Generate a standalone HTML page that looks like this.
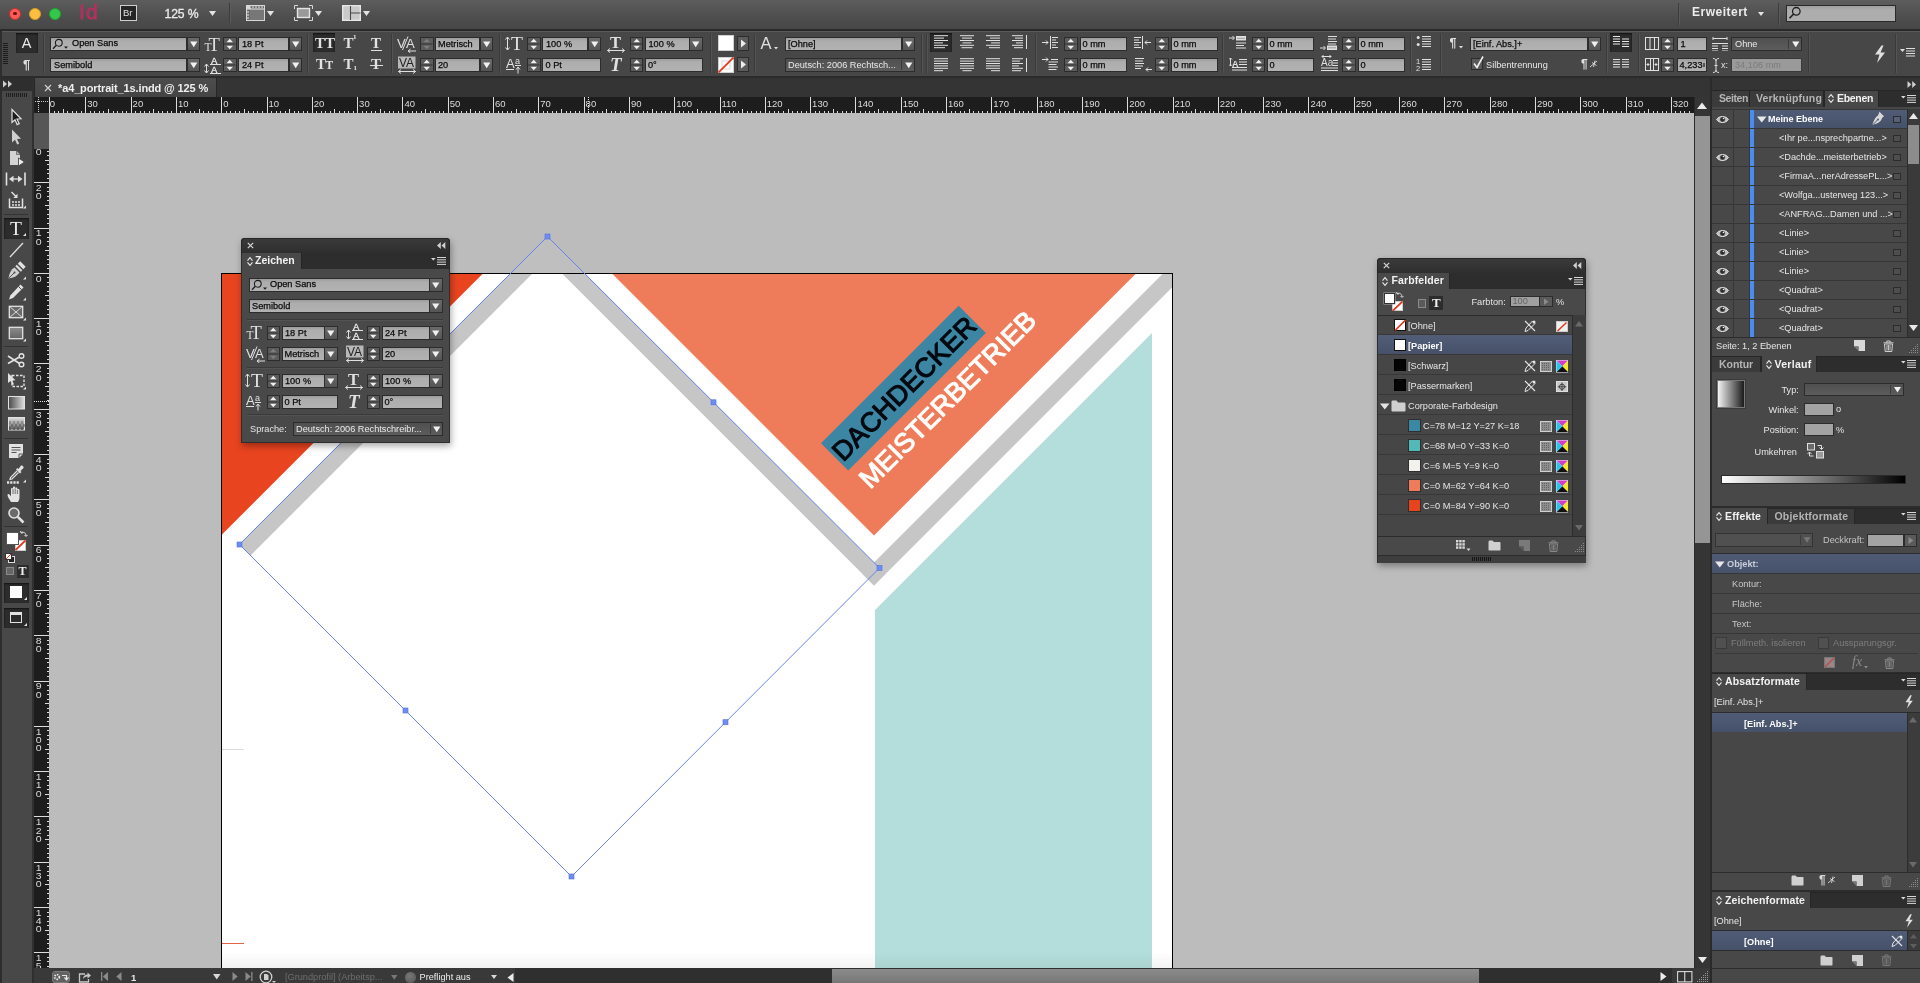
<!DOCTYPE html>
<html><head><meta charset="utf-8"><title>InDesign</title><style>
html,body{margin:0;padding:0;background:#484848;}
body{width:1920px;height:983px;position:relative;overflow:hidden;font-family:"Liberation Sans",sans-serif;will-change:transform;}
div,span.t,svg.i{position:absolute;box-sizing:border-box;}
span.t{white-space:nowrap;}
.f{background:linear-gradient(#9c9c9c 0,#adadad 3px,#b2b2b2 100%);border:1px solid #2c2c2c;}
.fd{background:linear-gradient(#505050,#5c5c5c);border:1px solid #2c2c2c;}
.dd{background:linear-gradient(#6a6a6a,#555);border:1px solid #2c2c2c;}
.st{background:#5c5c5c;border:1px solid #2c2c2c;}
.sel{background:#2c2c2c;box-shadow:inset 0 1px 2px #111;}
</style></head><body>
<div style="left:49px;top:113px;width:1646px;height:855px;background:#bcbcbc;"></div>
<svg class="i" style="left:49px;top:113px;" width="1646" height="855" viewBox="49 113 1646 855"><rect x="221" y="273" width="952" height="700" fill="#000"/><rect x="222" y="274" width="950" height="700" fill="#fff"/><clipPath id="pg"><rect x="222" y="274" width="950" height="700"/></clipPath><g clip-path="url(#pg)"><polygon points="222,274 482.5,274 222,534.5" fill="#e8441f"/><polygon points="612.5,274 1135.5,274 874,535.5" fill="#ee7b5a"/><polygon points="1152,333 1152,980 875,980 875,610" fill="#b3dedb"/><polygon points="547.5,236 558.75,247.25 250.5,555.5 239.25,544.25" fill="#c6c6c6"/><polygon points="547.5,236 885.5,574 874,585.5 536,247.5" fill="#c6c6c6"/><polygon points="862.5,574 1180,256.5 1180,279.5 874,585.5" fill="#c6c6c6"/><rect x="222" y="749" width="22" height="1" fill="#dcdcdc"/><rect x="222" y="943" width="22" height="1" fill="#e0634a"/><defs><linearGradient id="pgb" x1="0" x2="0" y1="0" y2="1"><stop offset="0" stop-color="#000" stop-opacity="0"/><stop offset="1" stop-color="#000" stop-opacity="0.05"/></linearGradient></defs><rect x="222" y="952" width="950" height="16" fill="url(#pgb)"/></g><polygon points="547.5,236 584.5,273 510.5,273" fill="#bfbfbf"/><g transform="translate(821,443.3) rotate(-45)"><rect x="0" y="0" width="194.6" height="38.5" fill="#3c86a3"/><text x="2" y="29.3" font-family="Liberation Sans, sans-serif" font-size="27" fill="#04090f" stroke="#04090f" stroke-width="1.1" stroke-linejoin="round" textLength="191" lengthAdjust="spacingAndGlyphs">DACHDECKER</text><text x="2" y="67.8" font-family="Liberation Sans, sans-serif" font-size="27" fill="#fffdfa" stroke="#fffdfa" stroke-width="1.1" stroke-linejoin="round" textLength="237" lengthAdjust="spacingAndGlyphs">MEISTERBETRIEB</text></g><polygon points="547.5,236.5 879.5,568 571.5,876.5 239.5,544.5" fill="none" stroke="#6684ea" stroke-width="1"/><rect x="545.0" y="234.0" width="5" height="5" fill="#6f8df0" stroke="#4f6fe0" stroke-width="0.6"/><rect x="877.0" y="565.5" width="5" height="5" fill="#6f8df0" stroke="#4f6fe0" stroke-width="0.6"/><rect x="569.0" y="874.0" width="5" height="5" fill="#6f8df0" stroke="#4f6fe0" stroke-width="0.6"/><rect x="237.0" y="542.0" width="5" height="5" fill="#6f8df0" stroke="#4f6fe0" stroke-width="0.6"/><rect x="711.0" y="399.8" width="5" height="5" fill="#6f8df0" stroke="#4f6fe0" stroke-width="0.6"/><rect x="723.0" y="719.7" width="5" height="5" fill="#6f8df0" stroke="#4f6fe0" stroke-width="0.6"/><rect x="403.0" y="708.0" width="5" height="5" fill="#6f8df0" stroke="#4f6fe0" stroke-width="0.6"/></svg>
<div style="left:49px;top:97px;width:1645px;height:16px;background:#1d1d1d;"></div>
<svg class="i" style="left:49px;top:97px;" width="1645" height="16" viewBox="49 97 1645 16"><path d="M49.6 111v2M54.1 111v2M58.6 111v2M63.1 109v4M67.7 111v2M72.2 111v2M76.7 111v2M81.3 111v2M85.8 97v16M90.3 111v2M94.9 111v2M99.4 111v2M103.9 111v2M108.4 109v4M113.0 111v2M117.5 111v2M122.0 111v2M126.6 111v2M131.1 97v16M135.6 111v2M140.2 111v2M144.7 111v2M149.2 111v2M153.8 109v4M158.3 111v2M162.8 111v2M167.3 111v2M171.9 111v2M176.4 97v16M180.9 111v2M185.5 111v2M190.0 111v2M194.5 111v2M199.0 109v4M203.6 111v2M208.1 111v2M212.6 111v2M217.2 111v2M221.7 97v16M226.2 111v2M230.8 111v2M235.3 111v2M239.8 111v2M244.3 109v4M248.9 111v2M253.4 111v2M257.9 111v2M262.5 111v2M267.0 97v16M271.5 111v2M276.1 111v2M280.6 111v2M285.1 111v2M289.6 109v4M294.2 111v2M298.7 111v2M303.2 111v2M307.8 111v2M312.3 97v16M316.8 111v2M321.4 111v2M325.9 111v2M330.4 111v2M334.9 109v4M339.5 111v2M344.0 111v2M348.5 111v2M353.1 111v2M357.6 97v16M362.1 111v2M366.7 111v2M371.2 111v2M375.7 111v2M380.2 109v4M384.8 111v2M389.3 111v2M393.8 111v2M398.4 111v2M402.9 97v16M407.4 111v2M412.0 111v2M416.5 111v2M421.0 111v2M425.6 109v4M430.1 111v2M434.6 111v2M439.1 111v2M443.7 111v2M448.2 97v16M452.7 111v2M457.3 111v2M461.8 111v2M466.3 111v2M470.9 109v4M475.4 111v2M479.9 111v2M484.4 111v2M489.0 111v2M493.5 97v16M498.0 111v2M502.6 111v2M507.1 111v2M511.6 111v2M516.1 109v4M520.7 111v2M525.2 111v2M529.7 111v2M534.3 111v2M538.8 97v16M543.3 111v2M547.9 111v2M552.4 111v2M556.9 111v2M561.5 109v4M566.0 111v2M570.5 111v2M575.0 111v2M579.6 111v2M584.1 97v16M588.6 111v2M593.2 111v2M597.7 111v2M602.2 111v2M606.8 109v4M611.3 111v2M615.8 111v2M620.3 111v2M624.9 111v2M629.4 97v16M633.9 111v2M638.5 111v2M643.0 111v2M647.5 111v2M652.0 109v4M656.6 111v2M661.1 111v2M665.6 111v2M670.2 111v2M674.7 97v16M679.2 111v2M683.8 111v2M688.3 111v2M692.8 111v2M697.4 109v4M701.9 111v2M706.4 111v2M710.9 111v2M715.5 111v2M720.0 97v16M724.5 111v2M729.1 111v2M733.6 111v2M738.1 111v2M742.7 109v4M747.2 111v2M751.7 111v2M756.2 111v2M760.8 111v2M765.3 97v16M769.8 111v2M774.4 111v2M778.9 111v2M783.4 111v2M788.0 109v4M792.5 111v2M797.0 111v2M801.5 111v2M806.1 111v2M810.6 97v16M815.1 111v2M819.7 111v2M824.2 111v2M828.7 111v2M833.2 109v4M837.8 111v2M842.3 111v2M846.8 111v2M851.4 111v2M855.9 97v16M860.4 111v2M865.0 111v2M869.5 111v2M874.0 111v2M878.5 109v4M883.1 111v2M887.6 111v2M892.1 111v2M896.7 111v2M901.2 97v16M905.7 111v2M910.3 111v2M914.8 111v2M919.3 111v2M923.9 109v4M928.4 111v2M932.9 111v2M937.4 111v2M942.0 111v2M946.5 97v16M951.0 111v2M955.6 111v2M960.1 111v2M964.6 111v2M969.2 109v4M973.7 111v2M978.2 111v2M982.7 111v2M987.3 111v2M991.8 97v16M996.3 111v2M1000.9 111v2M1005.4 111v2M1009.9 111v2M1014.5 109v4M1019.0 111v2M1023.5 111v2M1028.0 111v2M1032.6 111v2M1037.1 97v16M1041.6 111v2M1046.2 111v2M1050.7 111v2M1055.2 111v2M1059.8 109v4M1064.3 111v2M1068.8 111v2M1073.3 111v2M1077.9 111v2M1082.4 97v16M1086.9 111v2M1091.5 111v2M1096.0 111v2M1100.5 111v2M1105.0 109v4M1109.6 111v2M1114.1 111v2M1118.6 111v2M1123.2 111v2M1127.7 97v16M1132.2 111v2M1136.8 111v2M1141.3 111v2M1145.8 111v2M1150.4 109v4M1154.9 111v2M1159.4 111v2M1163.9 111v2M1168.5 111v2M1173.0 97v16M1177.5 111v2M1182.1 111v2M1186.6 111v2M1191.1 111v2M1195.7 109v4M1200.2 111v2M1204.7 111v2M1209.2 111v2M1213.8 111v2M1218.3 97v16M1222.8 111v2M1227.4 111v2M1231.9 111v2M1236.4 111v2M1241.0 109v4M1245.5 111v2M1250.0 111v2M1254.5 111v2M1259.1 111v2M1263.6 97v16M1268.1 111v2M1272.7 111v2M1277.2 111v2M1281.7 111v2M1286.2 109v4M1290.8 111v2M1295.3 111v2M1299.8 111v2M1304.4 111v2M1308.9 97v16M1313.4 111v2M1318.0 111v2M1322.5 111v2M1327.0 111v2M1331.6 109v4M1336.1 111v2M1340.6 111v2M1345.1 111v2M1349.7 111v2M1354.2 97v16M1358.7 111v2M1363.3 111v2M1367.8 111v2M1372.3 111v2M1376.9 109v4M1381.4 111v2M1385.9 111v2M1390.4 111v2M1395.0 111v2M1399.5 97v16M1404.0 111v2M1408.6 111v2M1413.1 111v2M1417.6 111v2M1422.2 109v4M1426.7 111v2M1431.2 111v2M1435.7 111v2M1440.3 111v2M1444.8 97v16M1449.3 111v2M1453.9 111v2M1458.4 111v2M1462.9 111v2M1467.5 109v4M1472.0 111v2M1476.5 111v2M1481.0 111v2M1485.6 111v2M1490.1 97v16M1494.6 111v2M1499.2 111v2M1503.7 111v2M1508.2 111v2M1512.8 109v4M1517.3 111v2M1521.8 111v2M1526.3 111v2M1530.9 111v2M1535.4 97v16M1539.9 111v2M1544.5 111v2M1549.0 111v2M1553.5 111v2M1558.1 109v4M1562.6 111v2M1567.1 111v2M1571.6 111v2M1576.2 111v2M1580.7 97v16M1585.2 111v2M1589.8 111v2M1594.3 111v2M1598.8 111v2M1603.4 109v4M1607.9 111v2M1612.4 111v2M1616.9 111v2M1621.5 111v2M1626.0 97v16M1630.5 111v2M1635.1 111v2M1639.6 111v2M1644.1 111v2M1648.7 109v4M1653.2 111v2M1657.7 111v2M1662.2 111v2M1666.8 111v2M1671.3 97v16M1675.8 111v2M1680.4 111v2M1684.9 111v2M1689.4 111v2M1694.0 109v4" stroke="#dcdcdc" stroke-width="1" fill="none" shape-rendering="crispEdges"/></svg>
<div style="left:49px;top:97px;width:1645px;height:16px;overflow:hidden;"><span class="t" style="left:-4.6px;top:0.5px;font-size:9.5px;line-height:12px;color:#dcdcdc;">40</span><span class="t" style="left:38.3px;top:0.5px;font-size:9.5px;line-height:12px;color:#dcdcdc;">30</span><span class="t" style="left:83.6px;top:0.5px;font-size:9.5px;line-height:12px;color:#dcdcdc;">20</span><span class="t" style="left:128.9px;top:0.5px;font-size:9.5px;line-height:12px;color:#dcdcdc;">10</span><span class="t" style="left:174.2px;top:0.5px;font-size:9.5px;line-height:12px;color:#dcdcdc;">0</span><span class="t" style="left:219.5px;top:0.5px;font-size:9.5px;line-height:12px;color:#dcdcdc;">10</span><span class="t" style="left:264.8px;top:0.5px;font-size:9.5px;line-height:12px;color:#dcdcdc;">20</span><span class="t" style="left:310.1px;top:0.5px;font-size:9.5px;line-height:12px;color:#dcdcdc;">30</span><span class="t" style="left:355.4px;top:0.5px;font-size:9.5px;line-height:12px;color:#dcdcdc;">40</span><span class="t" style="left:400.7px;top:0.5px;font-size:9.5px;line-height:12px;color:#dcdcdc;">50</span><span class="t" style="left:446.0px;top:0.5px;font-size:9.5px;line-height:12px;color:#dcdcdc;">60</span><span class="t" style="left:491.3px;top:0.5px;font-size:9.5px;line-height:12px;color:#dcdcdc;">70</span><span class="t" style="left:536.6px;top:0.5px;font-size:9.5px;line-height:12px;color:#dcdcdc;">80</span><span class="t" style="left:581.9px;top:0.5px;font-size:9.5px;line-height:12px;color:#dcdcdc;">90</span><span class="t" style="left:627.2px;top:0.5px;font-size:9.5px;line-height:12px;color:#dcdcdc;">100</span><span class="t" style="left:672.5px;top:0.5px;font-size:9.5px;line-height:12px;color:#dcdcdc;">110</span><span class="t" style="left:717.8px;top:0.5px;font-size:9.5px;line-height:12px;color:#dcdcdc;">120</span><span class="t" style="left:763.1px;top:0.5px;font-size:9.5px;line-height:12px;color:#dcdcdc;">130</span><span class="t" style="left:808.4px;top:0.5px;font-size:9.5px;line-height:12px;color:#dcdcdc;">140</span><span class="t" style="left:853.7px;top:0.5px;font-size:9.5px;line-height:12px;color:#dcdcdc;">150</span><span class="t" style="left:899.0px;top:0.5px;font-size:9.5px;line-height:12px;color:#dcdcdc;">160</span><span class="t" style="left:944.3px;top:0.5px;font-size:9.5px;line-height:12px;color:#dcdcdc;">170</span><span class="t" style="left:989.6px;top:0.5px;font-size:9.5px;line-height:12px;color:#dcdcdc;">180</span><span class="t" style="left:1034.9px;top:0.5px;font-size:9.5px;line-height:12px;color:#dcdcdc;">190</span><span class="t" style="left:1080.2px;top:0.5px;font-size:9.5px;line-height:12px;color:#dcdcdc;">200</span><span class="t" style="left:1125.5px;top:0.5px;font-size:9.5px;line-height:12px;color:#dcdcdc;">210</span><span class="t" style="left:1170.8px;top:0.5px;font-size:9.5px;line-height:12px;color:#dcdcdc;">220</span><span class="t" style="left:1216.1px;top:0.5px;font-size:9.5px;line-height:12px;color:#dcdcdc;">230</span><span class="t" style="left:1261.4px;top:0.5px;font-size:9.5px;line-height:12px;color:#dcdcdc;">240</span><span class="t" style="left:1306.7px;top:0.5px;font-size:9.5px;line-height:12px;color:#dcdcdc;">250</span><span class="t" style="left:1352.0px;top:0.5px;font-size:9.5px;line-height:12px;color:#dcdcdc;">260</span><span class="t" style="left:1397.3px;top:0.5px;font-size:9.5px;line-height:12px;color:#dcdcdc;">270</span><span class="t" style="left:1442.6px;top:0.5px;font-size:9.5px;line-height:12px;color:#dcdcdc;">280</span><span class="t" style="left:1487.9px;top:0.5px;font-size:9.5px;line-height:12px;color:#dcdcdc;">290</span><span class="t" style="left:1533.2px;top:0.5px;font-size:9.5px;line-height:12px;color:#dcdcdc;">300</span><span class="t" style="left:1578.5px;top:0.5px;font-size:9.5px;line-height:12px;color:#dcdcdc;">310</span><span class="t" style="left:1623.8px;top:0.5px;font-size:9.5px;line-height:12px;color:#dcdcdc;">320</span></div>
<svg class="i" style="left:586.5px;top:97px;" width="2" height="16" viewBox="0 0 2 16"><path d="M1 0v16" stroke="#e8e8e8" stroke-width="1" stroke-dasharray="1 1" shape-rendering="crispEdges"/></svg>
<div style="left:49px;top:97px;width:1px;height:16px;background:#dcdcdc;"></div>
<div style="left:34px;top:97px;width:15px;height:16px;background:#1d1d1d;"></div>
<svg class="i" style="left:34px;top:97px;" width="15" height="16" viewBox="0 0 15 16"><path d="M1 4.5h13M4.5 0v16" stroke="#cfcfcf" stroke-width="1" stroke-dasharray="1 1" fill="none" shape-rendering="crispEdges"/></svg>
<div style="left:34px;top:113px;width:15px;height:855px;background:#1d1d1d;"></div>
<svg class="i" style="left:34px;top:113px;" width="15" height="855" viewBox="34 113 15 855"><path d="M47 151.0h2M47 155.5h2M45 160.1h4M47 164.6h2M47 169.1h2M47 173.6h2M47 178.2h2M34 182.7h15M47 187.2h2M47 191.8h2M47 196.3h2M47 200.8h2M45 205.4h4M47 209.9h2M47 214.4h2M47 218.9h2M47 223.5h2M34 228.0h15M47 232.5h2M47 237.1h2M47 241.6h2M47 246.1h2M45 250.7h4M47 255.2h2M47 259.7h2M47 264.2h2M47 268.8h2M34 273.3h15M47 277.8h2M47 282.4h2M47 286.9h2M47 291.4h2M45 295.9h4M47 300.5h2M47 305.0h2M47 309.5h2M47 314.1h2M34 318.6h15M47 323.1h2M47 327.7h2M47 332.2h2M47 336.7h2M45 341.2h4M47 345.8h2M47 350.3h2M47 354.8h2M47 359.4h2M34 363.9h15M47 368.4h2M47 373.0h2M47 377.5h2M47 382.0h2M45 386.6h4M47 391.1h2M47 395.6h2M47 400.1h2M47 404.7h2M34 409.2h15M47 413.7h2M47 418.3h2M47 422.8h2M47 427.3h2M45 431.9h4M47 436.4h2M47 440.9h2M47 445.4h2M47 450.0h2M34 454.5h15M47 459.0h2M47 463.6h2M47 468.1h2M47 472.6h2M45 477.2h4M47 481.7h2M47 486.2h2M47 490.7h2M47 495.3h2M34 499.8h15M47 504.3h2M47 508.9h2M47 513.4h2M47 517.9h2M45 522.5h4M47 527.0h2M47 531.5h2M47 536.0h2M47 540.6h2M34 545.1h15M47 549.6h2M47 554.2h2M47 558.7h2M47 563.2h2M45 567.8h4M47 572.3h2M47 576.8h2M47 581.3h2M47 585.9h2M34 590.4h15M47 594.9h2M47 599.5h2M47 604.0h2M47 608.5h2M45 613.0h4M47 617.6h2M47 622.1h2M47 626.6h2M47 631.2h2M34 635.7h15M47 640.2h2M47 644.8h2M47 649.3h2M47 653.8h2M45 658.4h4M47 662.9h2M47 667.4h2M47 671.9h2M47 676.5h2M34 681.0h15M47 685.5h2M47 690.1h2M47 694.6h2M47 699.1h2M45 703.7h4M47 708.2h2M47 712.7h2M47 717.2h2M47 721.8h2M34 726.3h15M47 730.8h2M47 735.4h2M47 739.9h2M47 744.4h2M45 749.0h4M47 753.5h2M47 758.0h2M47 762.5h2M47 767.1h2M34 771.6h15M47 776.1h2M47 780.7h2M47 785.2h2M47 789.7h2M45 794.2h4M47 798.8h2M47 803.3h2M47 807.8h2M47 812.4h2M34 816.9h15M47 821.4h2M47 826.0h2M47 830.5h2M47 835.0h2M45 839.5h4M47 844.1h2M47 848.6h2M47 853.1h2M47 857.7h2M34 862.2h15M47 866.7h2M47 871.3h2M47 875.8h2M47 880.3h2M45 884.9h4M47 889.4h2M47 893.9h2M47 898.4h2M47 903.0h2M34 907.5h15M47 912.0h2M47 916.6h2M47 921.1h2M47 925.6h2M45 930.2h4M47 934.7h2M47 939.2h2M47 943.7h2M47 948.3h2M34 952.8h15M47 957.3h2M47 961.9h2M47 966.4h2" stroke="#dcdcdc" stroke-width="1" fill="none" shape-rendering="crispEdges"/></svg>
<div style="left:34px;top:113px;width:15px;height:855px;overflow:hidden;"><span class="t" style="left:1.7px;top:26.9px;font-size:10.5px;line-height:9px;color:#dcdcdc;transform:scaleY(0.8);">3</span><span class="t" style="left:1.7px;top:35.2px;font-size:10.5px;line-height:9px;color:#dcdcdc;transform:scaleY(0.8);">0</span><span class="t" style="left:1.7px;top:71.0px;font-size:10.5px;line-height:9px;color:#dcdcdc;transform:scaleY(0.8);">2</span><span class="t" style="left:1.7px;top:79.3px;font-size:10.5px;line-height:9px;color:#dcdcdc;transform:scaleY(0.8);">0</span><span class="t" style="left:1.7px;top:116.3px;font-size:10.5px;line-height:9px;color:#dcdcdc;transform:scaleY(0.8);">1</span><span class="t" style="left:1.7px;top:124.6px;font-size:10.5px;line-height:9px;color:#dcdcdc;transform:scaleY(0.8);">0</span><span class="t" style="left:1.7px;top:161.6px;font-size:10.5px;line-height:9px;color:#dcdcdc;transform:scaleY(0.8);">0</span><span class="t" style="left:1.7px;top:206.9px;font-size:10.5px;line-height:9px;color:#dcdcdc;transform:scaleY(0.8);">1</span><span class="t" style="left:1.7px;top:215.2px;font-size:10.5px;line-height:9px;color:#dcdcdc;transform:scaleY(0.8);">0</span><span class="t" style="left:1.7px;top:252.2px;font-size:10.5px;line-height:9px;color:#dcdcdc;transform:scaleY(0.8);">2</span><span class="t" style="left:1.7px;top:260.5px;font-size:10.5px;line-height:9px;color:#dcdcdc;transform:scaleY(0.8);">0</span><span class="t" style="left:1.7px;top:297.5px;font-size:10.5px;line-height:9px;color:#dcdcdc;transform:scaleY(0.8);">3</span><span class="t" style="left:1.7px;top:305.8px;font-size:10.5px;line-height:9px;color:#dcdcdc;transform:scaleY(0.8);">0</span><span class="t" style="left:1.7px;top:342.8px;font-size:10.5px;line-height:9px;color:#dcdcdc;transform:scaleY(0.8);">4</span><span class="t" style="left:1.7px;top:351.1px;font-size:10.5px;line-height:9px;color:#dcdcdc;transform:scaleY(0.8);">0</span><span class="t" style="left:1.7px;top:388.1px;font-size:10.5px;line-height:9px;color:#dcdcdc;transform:scaleY(0.8);">5</span><span class="t" style="left:1.7px;top:396.4px;font-size:10.5px;line-height:9px;color:#dcdcdc;transform:scaleY(0.8);">0</span><span class="t" style="left:1.7px;top:433.4px;font-size:10.5px;line-height:9px;color:#dcdcdc;transform:scaleY(0.8);">6</span><span class="t" style="left:1.7px;top:441.7px;font-size:10.5px;line-height:9px;color:#dcdcdc;transform:scaleY(0.8);">0</span><span class="t" style="left:1.7px;top:478.7px;font-size:10.5px;line-height:9px;color:#dcdcdc;transform:scaleY(0.8);">7</span><span class="t" style="left:1.7px;top:487.0px;font-size:10.5px;line-height:9px;color:#dcdcdc;transform:scaleY(0.8);">0</span><span class="t" style="left:1.7px;top:524.0px;font-size:10.5px;line-height:9px;color:#dcdcdc;transform:scaleY(0.8);">8</span><span class="t" style="left:1.7px;top:532.3px;font-size:10.5px;line-height:9px;color:#dcdcdc;transform:scaleY(0.8);">0</span><span class="t" style="left:1.7px;top:569.3px;font-size:10.5px;line-height:9px;color:#dcdcdc;transform:scaleY(0.8);">9</span><span class="t" style="left:1.7px;top:577.6px;font-size:10.5px;line-height:9px;color:#dcdcdc;transform:scaleY(0.8);">0</span><span class="t" style="left:1.7px;top:614.6px;font-size:10.5px;line-height:9px;color:#dcdcdc;transform:scaleY(0.8);">1</span><span class="t" style="left:1.7px;top:622.9px;font-size:10.5px;line-height:9px;color:#dcdcdc;transform:scaleY(0.8);">0</span><span class="t" style="left:1.7px;top:631.2px;font-size:10.5px;line-height:9px;color:#dcdcdc;transform:scaleY(0.8);">0</span><span class="t" style="left:1.7px;top:659.9px;font-size:10.5px;line-height:9px;color:#dcdcdc;transform:scaleY(0.8);">1</span><span class="t" style="left:1.7px;top:668.2px;font-size:10.5px;line-height:9px;color:#dcdcdc;transform:scaleY(0.8);">1</span><span class="t" style="left:1.7px;top:676.5px;font-size:10.5px;line-height:9px;color:#dcdcdc;transform:scaleY(0.8);">0</span><span class="t" style="left:1.7px;top:705.2px;font-size:10.5px;line-height:9px;color:#dcdcdc;transform:scaleY(0.8);">1</span><span class="t" style="left:1.7px;top:713.5px;font-size:10.5px;line-height:9px;color:#dcdcdc;transform:scaleY(0.8);">2</span><span class="t" style="left:1.7px;top:721.8px;font-size:10.5px;line-height:9px;color:#dcdcdc;transform:scaleY(0.8);">0</span><span class="t" style="left:1.7px;top:750.5px;font-size:10.5px;line-height:9px;color:#dcdcdc;transform:scaleY(0.8);">1</span><span class="t" style="left:1.7px;top:758.8px;font-size:10.5px;line-height:9px;color:#dcdcdc;transform:scaleY(0.8);">3</span><span class="t" style="left:1.7px;top:767.1px;font-size:10.5px;line-height:9px;color:#dcdcdc;transform:scaleY(0.8);">0</span><span class="t" style="left:1.7px;top:795.8px;font-size:10.5px;line-height:9px;color:#dcdcdc;transform:scaleY(0.8);">1</span><span class="t" style="left:1.7px;top:804.1px;font-size:10.5px;line-height:9px;color:#dcdcdc;transform:scaleY(0.8);">4</span><span class="t" style="left:1.7px;top:812.4px;font-size:10.5px;line-height:9px;color:#dcdcdc;transform:scaleY(0.8);">0</span><span class="t" style="left:1.7px;top:841.1px;font-size:10.5px;line-height:9px;color:#dcdcdc;transform:scaleY(0.8);">1</span><span class="t" style="left:1.7px;top:849.4px;font-size:10.5px;line-height:9px;color:#dcdcdc;transform:scaleY(0.8);">5</span><span class="t" style="left:1.7px;top:857.7px;font-size:10.5px;line-height:9px;color:#dcdcdc;transform:scaleY(0.8);">0</span></div>
<svg class="i" style="left:34px;top:400px;" width="15" height="2" viewBox="0 0 15 2"><path d="M0 1h15" stroke="#e8e8e8" stroke-width="1" stroke-dasharray="1 1" shape-rendering="crispEdges"/></svg>
<div style="left:34px;top:113px;width:15px;height:36px;background:#565656;"></div>
<div style="left:0px;top:0px;width:1920px;height:30px;background:linear-gradient(#5d5d5d,#4d4d4d 60%,#464646);"></div>
<div style="left:0px;top:29px;width:1920px;height:2px;background:#2a2a2a;"></div>
<div style="left:9px;top:7.5px;width:12px;height:12px;border-radius:50%;background:#fc5b57;border:0.5px solid #c9302c;"></div>
<div style="left:29px;top:7.5px;width:12px;height:12px;border-radius:50%;background:#fdbd3f;border:0.5px solid #d89e23;"></div>
<div style="left:49px;top:7.5px;width:12px;height:12px;border-radius:50%;background:#34c84a;border:0.5px solid #1ea532;"></div>
<div style="left:13.2px;top:11.7px;width:3.6px;height:3.6px;border-radius:50%;background:#7a0d0b;"></div>
<span class="t" style="left:79px;top:1.0px;font-size:21px;line-height:22px;color:#b3315f;font-weight:normal;letter-spacing:1.2px;-webkit-text-stroke:0.8px #b3315f;">Id</span>
<div style="left:120px;top:5px;width:16.5px;height:15.5px;background:#262626;border:1px solid #d0d0d0;"></div>
<span class="t" style="left:123px;top:7.0px;font-size:9.5px;line-height:12px;color:#e0e0e0;font-weight:normal;">Br</span>
<span class="t" style="left:164.5px;top:5.5px;font-size:12.2px;line-height:16px;color:#ececec;font-weight:normal;letter-spacing:-0.1px;-webkit-text-stroke:0.3px #ececec;">125 %</span>
<svg class="i" style="left:209px;top:11px;" width="7" height="5" viewBox="0 0 7 5"><polygon points="0,0 7,0 3.5,5" fill="#e4e4e4"/></svg>
<div style="left:229px;top:3px;width:1px;height:20px;background:#3d3d3d;"></div>
<div style="left:230px;top:3px;width:1px;height:20px;background:#5c5c5c;"></div>
<svg class="i" style="left:246px;top:5px;" width="19" height="16" viewBox="0 0 19 16"><rect x="0.5" y="0.5" width="18" height="15" fill="#6a6a6a" stroke="#d8d8d8"/><rect x="4" y="4" width="14" height="11" fill="#777"/><path d="M4 0v4M0 4h18M7 1v2M10 1v2M13 1v2M16 1v2M1 7h2M1 10h2M1 13h2" stroke="#e8e8e8" stroke-width="1" fill="none"/><rect x="0" y="0" width="4" height="4" fill="#d8d8d8"/></svg>
<svg class="i" style="left:267px;top:11px;" width="7" height="5" viewBox="0 0 7 5"><polygon points="0,0 7,0 3.5,5" fill="#e4e4e4"/></svg>
<svg class="i" style="left:294px;top:5px;" width="19" height="16" viewBox="0 0 19 16"><rect x="3.5" y="3.5" width="12" height="9" fill="#9a9a9a" stroke="#e4e4e4" stroke-width="1.4"/><path d="M0.5 4V0.5H4M15 0.5h3.5V4M18.5 12v3.5H15M4 15.5H0.5V12" stroke="#d8d8d8" stroke-width="1" fill="none"/></svg>
<svg class="i" style="left:314.5px;top:11px;" width="7" height="5" viewBox="0 0 7 5"><polygon points="0,0 7,0 3.5,5" fill="#e4e4e4"/></svg>
<svg class="i" style="left:342px;top:5px;" width="19" height="16" viewBox="0 0 19 16"><rect x="0.7" y="0.7" width="17.6" height="14.6" fill="#c9c9c9" stroke="#e6e6e6" stroke-width="1.4"/><path d="M8.5 1v14M8.5 8h10" stroke="#4a4a4a" stroke-width="1.1" fill="none"/></svg>
<svg class="i" style="left:362.5px;top:11px;" width="7" height="5" viewBox="0 0 7 5"><polygon points="0,0 7,0 3.5,5" fill="#e4e4e4"/></svg>
<div style="left:1678px;top:3px;width:1px;height:22px;background:#3d3d3d;"></div>
<div style="left:1679px;top:3px;width:1px;height:22px;background:#5a5a5a;"></div>
<span class="t" style="left:1692px;top:5.0px;font-size:12px;line-height:15px;color:#ececec;font-weight:bold;letter-spacing:0.5px;">Erweitert</span>
<svg class="i" style="left:1757.5px;top:12px;" width="6" height="4" viewBox="0 0 6 4"><polygon points="0,0 6,0 3.0,4" fill="#e4e4e4"/></svg>
<div style="left:1778px;top:3px;width:1px;height:22px;background:#3d3d3d;"></div>
<div style="left:1779px;top:3px;width:1px;height:22px;background:#5a5a5a;"></div>
<div style="left:1786px;top:4.5px;width:110px;height:17px;background:linear-gradient(#9d9d9d,#adadad 4px);border:1px solid #2a2a2a;"></div>
<svg class="i" style="left:1788px;top:6px;" width="14" height="14" viewBox="0 0 14 14"><circle cx="8.3" cy="5.3" r="3.8" fill="none" stroke="#1e1e1e" stroke-width="1.3"/><path d="M5.6 8L1.5 12.2" stroke="#1e1e1e" stroke-width="1.6"/></svg>
<div style="left:0px;top:31px;width:1920px;height:46px;background:#474747;"></div>
<div style="left:0px;top:31px;width:1920px;height:1px;background:#595959;"></div>
<div style="left:0px;top:76px;width:1920px;height:2px;background:#2b2b2b;"></div>
<svg class="i" style="left:3px;top:43px;" width="6" height="21" viewBox="0 0 6 21"><rect x="0" y="0" width="5" height="1" fill="#1c1c1c"/><rect x="0" y="2" width="5" height="1" fill="#1c1c1c"/><rect x="0" y="4" width="5" height="1" fill="#1c1c1c"/><rect x="0" y="6" width="5" height="1" fill="#1c1c1c"/><rect x="0" y="8" width="5" height="1" fill="#1c1c1c"/><rect x="0" y="10" width="5" height="1" fill="#1c1c1c"/><rect x="0" y="12" width="5" height="1" fill="#1c1c1c"/><rect x="0" y="14" width="5" height="1" fill="#1c1c1c"/><rect x="0" y="16" width="5" height="1" fill="#1c1c1c"/><rect x="0" y="18" width="5" height="1" fill="#1c1c1c"/><rect x="0" y="20" width="5" height="1" fill="#1c1c1c"/></svg>
<div class="sel" style="left:16px;top:32.5px;width:21.5px;height:20px;"></div>
<span class="t" style="left:21.8px;top:35.0px;font-size:14.5px;line-height:16px;color:#e8e8e8;font-weight:normal;">A</span>
<span class="t" style="left:23px;top:57.5px;font-size:13px;line-height:14px;color:#e0e0e0;font-weight:bold;">&#182;</span>
<div style="left:43px;top:34px;width:1px;height:39px;background:#3a3a3a;"></div>
<div style="left:44px;top:34px;width:1px;height:39px;background:#545454;"></div>
<div class="f" style="left:50px;top:36.5px;width:137px;height:14px;"></div>
<svg class="i" style="left:52px;top:37.5px;" width="18" height="12" viewBox="0 0 18 12"><circle cx="6.8" cy="4.8" r="3.4" fill="none" stroke="#1b1b1b" stroke-width="1.1"/><path d="M4.3 7.3L1 10.8" stroke="#1b1b1b" stroke-width="1.3"/><polygon points="12,8.5 16,8.5 14,10.8" fill="#1b1b1b"/></svg>
<span class="t" style="left:72px;top:37.0px;font-size:9.2px;line-height:13px;color:#050505;font-weight:normal;-webkit-text-stroke:0.25px #111;">Open Sans</span>
<div class="dd" style="left:186.5px;top:36.5px;width:13.5px;height:14px;"></div>
<svg class="i" style="left:186.5px;top:36.5px;" width="13.5" height="14" viewBox="0 0 13.5 14"><polygon points="3.15,4.4 10.35,4.4 6.75,10.2" fill="#f2f2f2"/></svg>
<div class="f" style="left:50px;top:57.5px;width:137px;height:14px;"></div>
<span class="t" style="left:54px;top:58.5px;font-size:9.2px;line-height:13px;color:#050505;font-weight:normal;-webkit-text-stroke:0.25px #111;">Semibold</span>
<div class="dd" style="left:186.5px;top:57.5px;width:13.5px;height:14px;"></div>
<svg class="i" style="left:186.5px;top:57.5px;" width="13.5" height="14" viewBox="0 0 13.5 14"><polygon points="3.15,4.4 10.35,4.4 6.75,10.2" fill="#f2f2f2"/></svg>
<svg class="i" style="left:204px;top:36.5px;" width="18" height="15" viewBox="0 0 18 15"><text x="0.5" y="14" font-family="Liberation Serif" font-size="11.5" fill="#e0e0e0">T</text><text x="4.5" y="14" font-family="Liberation Serif" font-size="18.5" fill="#e0e0e0">T</text></svg>
<div class="st" style="left:223px;top:36.5px;width:13.5px;height:14px;"></div>
<svg class="i" style="left:223px;top:36.5px;" width="13.5" height="14" viewBox="0 0 13.5 14"><rect x="1" y="6.5" width="11.5" height="1" fill="#333"/><polygon points="3.55,5.3 9.95,5.3 6.75,1.8" fill="#f0f0f0"/><polygon points="3.55,8.7 9.95,8.7 6.75,12.2" fill="#f0f0f0"/></svg>
<div class="f" style="left:238px;top:36.5px;width:51px;height:14px;"></div>
<span class="t" style="left:242px;top:37.5px;font-size:9.2px;line-height:13px;color:#050505;font-weight:normal;-webkit-text-stroke:0.25px #111;">18 Pt</span>
<div class="dd" style="left:288.5px;top:36.5px;width:13.5px;height:14px;"></div>
<svg class="i" style="left:288.5px;top:36.5px;" width="13.5" height="14" viewBox="0 0 13.5 14"><polygon points="3.15,4.4 10.35,4.4 6.75,10.2" fill="#f2f2f2"/></svg>
<svg class="i" style="left:204px;top:56px;" width="18" height="18" viewBox="0 0 18 18"><text x="7" y="7.5" font-family="Liberation Sans" font-size="9.5" fill="#eaeaea" stroke="#eaeaea" stroke-width="0.3">A</text><text x="7" y="16.5" font-family="Liberation Sans" font-size="9.5" fill="#eaeaea" stroke="#eaeaea" stroke-width="0.3">A</text><path d="M6 8.5h11M6 17.5h11M2.5 8v9M0.5 10.5L2.5 8L4.5 10.5M0.5 14.5L2.5 17L4.5 14.5" stroke="#e0e0e0" stroke-width="1" fill="none"/></svg>
<div class="st" style="left:223px;top:57.5px;width:13.5px;height:14px;"></div>
<svg class="i" style="left:223px;top:57.5px;" width="13.5" height="14" viewBox="0 0 13.5 14"><rect x="1" y="6.5" width="11.5" height="1" fill="#333"/><polygon points="3.55,5.3 9.95,5.3 6.75,1.8" fill="#f0f0f0"/><polygon points="3.55,8.7 9.95,8.7 6.75,12.2" fill="#f0f0f0"/></svg>
<div class="f" style="left:238px;top:57.5px;width:51px;height:14px;"></div>
<span class="t" style="left:242px;top:58.5px;font-size:9.2px;line-height:13px;color:#050505;font-weight:normal;-webkit-text-stroke:0.25px #111;">24 Pt</span>
<div class="dd" style="left:288.5px;top:57.5px;width:13.5px;height:14px;"></div>
<svg class="i" style="left:288.5px;top:57.5px;" width="13.5" height="14" viewBox="0 0 13.5 14"><polygon points="3.15,4.4 10.35,4.4 6.75,10.2" fill="#f2f2f2"/></svg>
<div style="left:307px;top:34px;width:1px;height:39px;background:#3a3a3a;"></div>
<div style="left:308px;top:34px;width:1px;height:39px;background:#545454;"></div>
<div class="sel" style="left:313px;top:32.5px;width:22px;height:19.5px;"></div>
<span class="t" style="left:315px;top:35.5px;font-family:'Liberation Serif',serif;font-weight:bold;font-size:15px;line-height:15px;color:#e2e2e2;">TT</span>
<span class="t" style="left:343.5px;top:35.5px;font-family:'Liberation Serif',serif;font-weight:bold;font-size:15px;line-height:15px;color:#e2e2e2;">T</span>
<span class="t" style="left:353px;top:33.5px;font-family:'Liberation Serif',serif;font-weight:bold;font-size:7px;line-height:7px;color:#e2e2e2;">1</span>
<span class="t" style="left:371px;top:35.5px;font-family:'Liberation Serif',serif;font-weight:bold;font-size:15px;line-height:15px;color:#e2e2e2;">T</span>
<div style="left:370.5px;top:50px;width:11.5px;height:1px;background:#e0e0e0;"></div>
<span class="t" style="left:316px;top:57px;font-family:'Liberation Serif',serif;font-weight:bold;font-size:15px;line-height:15px;color:#e2e2e2;">T</span>
<span class="t" style="left:325.5px;top:60px;font-family:'Liberation Serif',serif;font-weight:bold;font-size:11.5px;line-height:11.5px;color:#e2e2e2;">T</span>
<span class="t" style="left:343.5px;top:57px;font-family:'Liberation Serif',serif;font-weight:bold;font-size:15px;line-height:15px;color:#e2e2e2;">T</span>
<span class="t" style="left:353.5px;top:65px;font-family:'Liberation Serif',serif;font-weight:bold;font-size:7px;line-height:7px;color:#e2e2e2;">1</span>
<span class="t" style="left:371px;top:57px;font-family:'Liberation Serif',serif;font-weight:bold;font-size:15px;line-height:15px;color:#e2e2e2;">T</span>
<div style="left:369.5px;top:65px;width:13px;height:1.2px;background:#e0e0e0;"></div>
<div style="left:391px;top:34px;width:1px;height:39px;background:#3a3a3a;"></div>
<div style="left:392px;top:34px;width:1px;height:39px;background:#545454;"></div>
<svg class="i" style="left:397px;top:36px;" width="20" height="17" viewBox="0 0 20 17"><text x="0" y="12" font-family="Liberation Sans" font-size="13" fill="#e0e0e0">V</text><text x="9" y="12" font-family="Liberation Sans" font-size="13" fill="#e0e0e0">A</text><path d="M11 0.5L5.5 14" stroke="#e0e0e0" stroke-width="1"/><path d="M11 15h8M13.5 13L11 15L13.5 17" stroke="#e0e0e0" stroke-width="1" fill="none"/></svg>
<div class="st" style="left:420px;top:36.5px;width:13.5px;height:14px;"></div>
<svg class="i" style="left:420px;top:36.5px;" width="13.5" height="14" viewBox="0 0 13.5 14"><rect x="1" y="6.5" width="11.5" height="1" fill="#333"/><polygon points="3.55,5.3 9.95,5.3 6.75,1.8" fill="#7d7d7d"/><polygon points="3.55,8.7 9.95,8.7 6.75,12.2" fill="#7d7d7d"/></svg>
<div class="f" style="left:434.5px;top:36.5px;width:45.5px;height:14px;"></div>
<span class="t" style="left:438.0px;top:37.5px;font-size:9.2px;line-height:13px;color:#050505;font-weight:normal;-webkit-text-stroke:0.25px #111;">Metrisch</span>
<div class="dd" style="left:479.5px;top:36.5px;width:13.5px;height:14px;"></div>
<svg class="i" style="left:479.5px;top:36.5px;" width="13.5" height="14" viewBox="0 0 13.5 14"><polygon points="3.15,4.4 10.35,4.4 6.75,10.2" fill="#f2f2f2"/></svg>
<svg class="i" style="left:397px;top:56px;" width="20" height="18" viewBox="0 0 20 18"><rect x="1" y="0.5" width="17.5" height="12" fill="#b8b8b8"/><text x="2" y="11" font-family="Liberation Sans" font-size="12" fill="#222">VA</text><path d="M1.5 15.5h17M4 13.5L1.5 15.5L4 17.5M16 13.5L18.5 15.5L16 17.5" stroke="#e0e0e0" stroke-width="1" fill="none"/></svg>
<div class="st" style="left:420px;top:57.5px;width:13.5px;height:14px;"></div>
<svg class="i" style="left:420px;top:57.5px;" width="13.5" height="14" viewBox="0 0 13.5 14"><rect x="1" y="6.5" width="11.5" height="1" fill="#333"/><polygon points="3.55,5.3 9.95,5.3 6.75,1.8" fill="#f0f0f0"/><polygon points="3.55,8.7 9.95,8.7 6.75,12.2" fill="#f0f0f0"/></svg>
<div class="f" style="left:434.5px;top:57.5px;width:45.5px;height:14px;"></div>
<span class="t" style="left:438.0px;top:58.5px;font-size:9.2px;line-height:13px;color:#050505;font-weight:normal;-webkit-text-stroke:0.25px #111;">20</span>
<div class="dd" style="left:479.5px;top:57.5px;width:13.5px;height:14px;"></div>
<svg class="i" style="left:479.5px;top:57.5px;" width="13.5" height="14" viewBox="0 0 13.5 14"><polygon points="3.15,4.4 10.35,4.4 6.75,10.2" fill="#f2f2f2"/></svg>
<div style="left:499px;top:34px;width:1px;height:39px;background:#3a3a3a;"></div>
<div style="left:500px;top:34px;width:1px;height:39px;background:#545454;"></div>
<svg class="i" style="left:505px;top:35px;" width="19" height="17" viewBox="0 0 19 17"><text x="6" y="15" font-family="Liberation Serif" font-size="19.5" fill="#e4e4e4">T</text><path d="M2.5 2v13M0.5 4.5L2.5 2L4.5 4.5M0.5 12.5L2.5 15L4.5 12.5" stroke="#e0e0e0" stroke-width="1" fill="none"/></svg>
<div class="st" style="left:527px;top:36.5px;width:13.5px;height:14px;"></div>
<svg class="i" style="left:527px;top:36.5px;" width="13.5" height="14" viewBox="0 0 13.5 14"><rect x="1" y="6.5" width="11.5" height="1" fill="#333"/><polygon points="3.55,5.3 9.95,5.3 6.75,1.8" fill="#f0f0f0"/><polygon points="3.55,8.7 9.95,8.7 6.75,12.2" fill="#f0f0f0"/></svg>
<div class="f" style="left:542px;top:36.5px;width:46px;height:14px;"></div>
<span class="t" style="left:546px;top:37.5px;font-size:9.2px;line-height:13px;color:#050505;font-weight:normal;-webkit-text-stroke:0.25px #111;">100 %</span>
<div class="dd" style="left:587.5px;top:36.5px;width:13.5px;height:14px;"></div>
<svg class="i" style="left:587.5px;top:36.5px;" width="13.5" height="14" viewBox="0 0 13.5 14"><polygon points="3.15,4.4 10.35,4.4 6.75,10.2" fill="#f2f2f2"/></svg>
<svg class="i" style="left:506px;top:57px;" width="18" height="17" viewBox="0 0 18 17"><text x="0" y="11" font-family="Liberation Sans" font-size="13" fill="#e0e0e0">A</text><text x="9" y="7" font-family="Liberation Sans" font-size="9" fill="#e0e0e0">a</text><path d="M0 12.5h8M9 8.5h6M12 16.5v-6M10 12.5L12 10L14 12.5" stroke="#e0e0e0" stroke-width="1" fill="none"/></svg>
<div class="st" style="left:527px;top:57.5px;width:13.5px;height:14px;"></div>
<svg class="i" style="left:527px;top:57.5px;" width="13.5" height="14" viewBox="0 0 13.5 14"><rect x="1" y="6.5" width="11.5" height="1" fill="#333"/><polygon points="3.55,5.3 9.95,5.3 6.75,1.8" fill="#f0f0f0"/><polygon points="3.55,8.7 9.95,8.7 6.75,12.2" fill="#f0f0f0"/></svg>
<div class="f" style="left:542px;top:57.5px;width:59px;height:14px;"></div>
<span class="t" style="left:545.5px;top:58.5px;font-size:9.2px;line-height:13px;color:#050505;font-weight:normal;-webkit-text-stroke:0.25px #111;">0 Pt</span>
<svg class="i" style="left:606px;top:34px;" width="20" height="19" viewBox="0 0 20 19"><text x="4" y="13.5" font-family="Liberation Serif" font-weight="bold" font-size="16.5" fill="#e0e0e0">T</text><path d="M1.5 16.5h17M4 14.5L1.5 16.5L4 18.5M16 14.5L18.5 16.5L16 18.5" stroke="#e0e0e0" stroke-width="1" fill="none"/></svg>
<div class="st" style="left:629.5px;top:36.5px;width:13.5px;height:14px;"></div>
<svg class="i" style="left:629.5px;top:36.5px;" width="13.5" height="14" viewBox="0 0 13.5 14"><rect x="1" y="6.5" width="11.5" height="1" fill="#333"/><polygon points="3.55,5.3 9.95,5.3 6.75,1.8" fill="#f0f0f0"/><polygon points="3.55,8.7 9.95,8.7 6.75,12.2" fill="#f0f0f0"/></svg>
<div class="f" style="left:644.5px;top:36.5px;width:45px;height:14px;"></div>
<span class="t" style="left:648.5px;top:37.5px;font-size:9.2px;line-height:13px;color:#050505;font-weight:normal;-webkit-text-stroke:0.25px #111;">100 %</span>
<div class="dd" style="left:689px;top:36.5px;width:13.5px;height:14px;"></div>
<svg class="i" style="left:689px;top:36.5px;" width="13.5" height="14" viewBox="0 0 13.5 14"><polygon points="3.15,4.4 10.35,4.4 6.75,10.2" fill="#f2f2f2"/></svg>
<svg class="i" style="left:609px;top:56px;" width="17" height="17" viewBox="0 0 17 17"><text x="1" y="15" font-family="Liberation Serif" font-style="italic" font-weight="bold" font-size="19" fill="#e0e0e0">T</text></svg>
<div class="st" style="left:629.5px;top:57.5px;width:13.5px;height:14px;"></div>
<svg class="i" style="left:629.5px;top:57.5px;" width="13.5" height="14" viewBox="0 0 13.5 14"><rect x="1" y="6.5" width="11.5" height="1" fill="#333"/><polygon points="3.55,5.3 9.95,5.3 6.75,1.8" fill="#f0f0f0"/><polygon points="3.55,8.7 9.95,8.7 6.75,12.2" fill="#f0f0f0"/></svg>
<div class="f" style="left:644.5px;top:57.5px;width:58px;height:14px;"></div>
<span class="t" style="left:648.0px;top:58.5px;font-size:9.2px;line-height:13px;color:#050505;font-weight:normal;-webkit-text-stroke:0.25px #111;">0&#176;</span>
<div style="left:710px;top:34px;width:1px;height:39px;background:#3a3a3a;"></div>
<div style="left:711px;top:34px;width:1px;height:39px;background:#545454;"></div>
<div style="left:717.5px;top:35px;width:16px;height:16px;background:#fff;border:1px solid #d0d0d0;"></div>
<div class="st" style="left:736.5px;top:36.0px;width:12px;height:15px;"></div>
<svg class="i" style="left:736.5px;top:36.0px;" width="12" height="15" viewBox="0 0 12 15"><polygon points="4,3.5 9,7.5 4,11.5" fill="#eee"/></svg>
<div style="left:717.5px;top:56.5px;width:16px;height:16px;background:#fff;border:1px solid #d0d0d0;"></div>
<svg class="i" style="left:717.5px;top:56.5px;" width="16" height="16" viewBox="0 0 16 16"><rect x="4" y="4" width="8" height="8" fill="none" stroke="#d8d8d8"/><path d="M0.5 15.5L15.5 0.5" stroke="#e0371d" stroke-width="1.8"/></svg>
<div class="st" style="left:736.5px;top:57.0px;width:12px;height:15px;"></div>
<svg class="i" style="left:736.5px;top:57.0px;" width="12" height="15" viewBox="0 0 12 15"><polygon points="4,3.5 9,7.5 4,11.5" fill="#eee"/></svg>
<div style="left:754px;top:34px;width:1px;height:39px;background:#3a3a3a;"></div>
<div style="left:755px;top:34px;width:1px;height:39px;background:#545454;"></div>
<span class="t" style="left:760.5px;top:33.5px;font-size:16.5px;line-height:18px;color:#e0e0e0;font-weight:normal;">A</span>
<svg class="i" style="left:774px;top:46.5px;" width="5" height="3" viewBox="0 0 5 3"><polygon points="0,0 4,0 2,2.6" fill="#e0e0e0"/></svg>
<div class="f" style="left:784.5px;top:36.5px;width:117.5px;height:14px;"></div>
<span class="t" style="left:788.0px;top:37.5px;font-size:9.2px;line-height:13px;color:#050505;font-weight:normal;-webkit-text-stroke:0.25px #111;">[Ohne]</span>
<div class="dd" style="left:901.5px;top:36.5px;width:13.5px;height:14px;"></div>
<svg class="i" style="left:901.5px;top:36.5px;" width="13.5" height="14" viewBox="0 0 13.5 14"><polygon points="3.15,4.4 10.35,4.4 6.75,10.2" fill="#f2f2f2"/></svg>
<div class="fd" style="left:784.5px;top:57.5px;width:130.5px;height:14px;"></div>
<span class="t" style="left:788.0px;top:58.5px;font-size:9.2px;line-height:13px;color:#eaeaea;font-weight:normal;">Deutsch: 2006 Rechtsch...</span>
<div style="left:901px;top:59.5px;width:1px;height:10px;background:#3a3a3a;"></div>
<svg class="i" style="left:901.5px;top:57.5px;" width="13.5" height="14" viewBox="0 0 13.5 14"><polygon points="3.1,4.4 10.4,4.4 6.75,10.2" fill="#f2f2f2"/></svg>
<div style="left:921px;top:34px;width:1px;height:39px;background:#3a3a3a;"></div>
<div style="left:922px;top:34px;width:1px;height:39px;background:#545454;"></div>
<div style="left:926px;top:34px;width:1px;height:39px;background:#3a3a3a;"></div>
<div style="left:927px;top:34px;width:1px;height:39px;background:#545454;"></div>
<div class="sel" style="left:930px;top:32.5px;width:21.5px;height:19.5px;"></div>
<svg class="i" style="left:933.5px;top:35px;" width="16" height="14" viewBox="0 0 16 14"><path d="M0 0.7h14M0 3.1h10M0 5.5h14M0 7.9h9M0 10.3h14M0 12.7h11" stroke="#e2e2e2" stroke-width="1" fill="none"/></svg>
<svg class="i" style="left:933.5px;top:57.5px;" width="16" height="14" viewBox="0 0 16 14"><path d="M0 0.7h14M0 3.1h14M0 5.5h14M0 7.9h14M0 10.3h14M0 12.7h9" stroke="#e2e2e2" stroke-width="1" fill="none"/></svg>
<svg class="i" style="left:959.5px;top:35px;" width="16" height="14" viewBox="0 0 16 14"><path d="M0.0 0.7h14M2.0 3.1h10M0.0 5.5h14M2.5 7.9h9M0.0 10.3h14M1.5 12.7h11" stroke="#e2e2e2" stroke-width="1" fill="none"/></svg>
<svg class="i" style="left:959.5px;top:57.5px;" width="16" height="14" viewBox="0 0 16 14"><path d="M0 0.7h14M0 3.1h14M0 5.5h14M0 7.9h14M0 10.3h14M2.5 12.7h9" stroke="#e2e2e2" stroke-width="1" fill="none"/></svg>
<svg class="i" style="left:985.5px;top:35px;" width="16" height="14" viewBox="0 0 16 14"><path d="M0 0.7h14M4 3.1h10M0 5.5h14M5 7.9h9M0 10.3h14M3 12.7h11" stroke="#e2e2e2" stroke-width="1" fill="none"/></svg>
<svg class="i" style="left:985.5px;top:57.5px;" width="16" height="14" viewBox="0 0 16 14"><path d="M0 0.7h14M0 3.1h14M0 5.5h14M0 7.9h14M0 10.3h14M5 12.7h9" stroke="#e2e2e2" stroke-width="1" fill="none"/></svg>
<svg class="i" style="left:1011.5px;top:35px;" width="16" height="14" viewBox="0 0 16 14"><path d="M0 0.7h11M3 3.1h8M0 5.5h11M4 7.9h7M0 10.3h11M2 12.7h9M14.5 0v14" stroke="#e2e2e2" stroke-width="1" fill="none"/></svg>
<svg class="i" style="left:1011.5px;top:57.5px;" width="16" height="14" viewBox="0 0 16 14"><path d="M0 0.7h11M0 3.1h8M0 5.5h11M0 7.9h7M0 10.3h11M0 12.7h9M14.5 0v14" stroke="#e2e2e2" stroke-width="1" fill="none"/></svg>
<div style="left:1035px;top:34px;width:1px;height:39px;background:#3a3a3a;"></div>
<div style="left:1036px;top:34px;width:1px;height:39px;background:#545454;"></div>
<svg class="i" style="left:1042px;top:35px;" width="17" height="15" viewBox="0 0 17 15"><path d="M0 7.5h6M4 5.5L6 7.5L4 9.5M8.5 1v13M10 2.5h6M10 5h4M10 7.5h6M10 10h4M10 12.5h6" stroke="#e0e0e0" stroke-width="1" fill="none"/></svg>
<div class="st" style="left:1064px;top:36.5px;width:13.5px;height:14px;"></div>
<svg class="i" style="left:1064px;top:36.5px;" width="13.5" height="14" viewBox="0 0 13.5 14"><rect x="1" y="6.5" width="11.5" height="1" fill="#333"/><polygon points="3.55,5.3 9.95,5.3 6.75,1.8" fill="#f0f0f0"/><polygon points="3.55,8.7 9.95,8.7 6.75,12.2" fill="#f0f0f0"/></svg>
<div class="f" style="left:1079.5px;top:36.5px;width:47.5px;height:14px;"></div>
<span class="t" style="left:1082.5px;top:37.5px;font-size:9.2px;line-height:13px;color:#050505;font-weight:normal;-webkit-text-stroke:0.25px #111;">0 mm</span>
<svg class="i" style="left:1042px;top:56px;" width="17" height="16" viewBox="0 0 17 16"><path d="M0 3.5h6M4 1.5L6 3.5L4 5.5M9 3.5h7M6.5 6h9.5M6.5 8.5h8M6.5 11h9.5M6.5 13.5h8" stroke="#e0e0e0" stroke-width="1" fill="none"/></svg>
<div class="st" style="left:1064px;top:57.5px;width:13.5px;height:14px;"></div>
<svg class="i" style="left:1064px;top:57.5px;" width="13.5" height="14" viewBox="0 0 13.5 14"><rect x="1" y="6.5" width="11.5" height="1" fill="#333"/><polygon points="3.55,5.3 9.95,5.3 6.75,1.8" fill="#f0f0f0"/><polygon points="3.55,8.7 9.95,8.7 6.75,12.2" fill="#f0f0f0"/></svg>
<div class="f" style="left:1079.5px;top:57.5px;width:47.5px;height:14px;"></div>
<span class="t" style="left:1082.5px;top:58.5px;font-size:9.2px;line-height:13px;color:#050505;font-weight:normal;-webkit-text-stroke:0.25px #111;">0 mm</span>
<svg class="i" style="left:1133px;top:35px;" width="18" height="15" viewBox="0 0 18 15"><path d="M18 7.5h-6M14 5.5L12 7.5L14 9.5M9.5 1v13M1 2.5h7M1 5h5M1 7.5h7M1 10h5M1 12.5h7" stroke="#e0e0e0" stroke-width="1" fill="none"/></svg>
<div class="st" style="left:1155px;top:36.5px;width:13.5px;height:14px;"></div>
<svg class="i" style="left:1155px;top:36.5px;" width="13.5" height="14" viewBox="0 0 13.5 14"><rect x="1" y="6.5" width="11.5" height="1" fill="#333"/><polygon points="3.55,5.3 9.95,5.3 6.75,1.8" fill="#f0f0f0"/><polygon points="3.55,8.7 9.95,8.7 6.75,12.2" fill="#f0f0f0"/></svg>
<div class="f" style="left:1170.5px;top:36.5px;width:47.5px;height:14px;"></div>
<span class="t" style="left:1173.5px;top:37.5px;font-size:9.2px;line-height:13px;color:#050505;font-weight:normal;-webkit-text-stroke:0.25px #111;">0 mm</span>
<svg class="i" style="left:1134px;top:56px;" width="18" height="17" viewBox="0 0 18 17"><path d="M18 13.5h-6M14 11.5L12 13.5L14 15.5M1 2.5h9M1 5h8M1 7.5h9M1 10h8M1 12.5h6" stroke="#e0e0e0" stroke-width="1" fill="none"/></svg>
<div class="st" style="left:1155px;top:57.5px;width:13.5px;height:14px;"></div>
<svg class="i" style="left:1155px;top:57.5px;" width="13.5" height="14" viewBox="0 0 13.5 14"><rect x="1" y="6.5" width="11.5" height="1" fill="#333"/><polygon points="3.55,5.3 9.95,5.3 6.75,1.8" fill="#f0f0f0"/><polygon points="3.55,8.7 9.95,8.7 6.75,12.2" fill="#f0f0f0"/></svg>
<div class="f" style="left:1170.5px;top:57.5px;width:47.5px;height:14px;"></div>
<span class="t" style="left:1173.5px;top:58.5px;font-size:9.2px;line-height:13px;color:#050505;font-weight:normal;-webkit-text-stroke:0.25px #111;">0 mm</span>
<div style="left:1222px;top:34px;width:1px;height:39px;background:#3a3a3a;"></div>
<div style="left:1223px;top:34px;width:1px;height:39px;background:#545454;"></div>
<svg class="i" style="left:1229px;top:35px;" width="18" height="15" viewBox="0 0 18 15"><path d="M0 3h5M3.5 1L5.5 3L3.5 5M7 8h10M7 10.5h8M7 13h10M7 15.5h8" stroke="#e0e0e0" stroke-width="1" fill="none"/><rect x="7" y="1" width="10" height="4.5" fill="#e0e0e0"/><path d="M8.5 3.3h7" stroke="#555" stroke-width="1" stroke-dasharray="1 1"/></svg>
<div class="st" style="left:1251.5px;top:36.5px;width:13.5px;height:14px;"></div>
<svg class="i" style="left:1251.5px;top:36.5px;" width="13.5" height="14" viewBox="0 0 13.5 14"><rect x="1" y="6.5" width="11.5" height="1" fill="#333"/><polygon points="3.55,5.3 9.95,5.3 6.75,1.8" fill="#f0f0f0"/><polygon points="3.55,8.7 9.95,8.7 6.75,12.2" fill="#f0f0f0"/></svg>
<div class="f" style="left:1266.5px;top:36.5px;width:47.5px;height:14px;"></div>
<span class="t" style="left:1269.5px;top:37.5px;font-size:9.2px;line-height:13px;color:#050505;font-weight:normal;-webkit-text-stroke:0.25px #111;">0 mm</span>
<svg class="i" style="left:1229px;top:57px;" width="18" height="15" viewBox="0 0 18 15"><text x="3" y="9.5" font-family="Liberation Sans" font-weight="bold" font-size="9" fill="#e0e0e0">A</text><path d="M1.5 1v8M0 2.5L1.5 1L3 2.5M0 7.5L1.5 9L3 7.5M10 2.5h8M10 5h8M10 7.5h8M3 10.5h15M3 13h15" stroke="#e0e0e0" stroke-width="1" fill="none"/></svg>
<div class="st" style="left:1251.5px;top:57.5px;width:13.5px;height:14px;"></div>
<svg class="i" style="left:1251.5px;top:57.5px;" width="13.5" height="14" viewBox="0 0 13.5 14"><rect x="1" y="6.5" width="11.5" height="1" fill="#333"/><polygon points="3.55,5.3 9.95,5.3 6.75,1.8" fill="#f0f0f0"/><polygon points="3.55,8.7 9.95,8.7 6.75,12.2" fill="#f0f0f0"/></svg>
<div class="f" style="left:1266.5px;top:57.5px;width:47.5px;height:14px;"></div>
<span class="t" style="left:1269.5px;top:58.5px;font-size:9.2px;line-height:13px;color:#050505;font-weight:normal;-webkit-text-stroke:0.25px #111;">0</span>
<svg class="i" style="left:1320px;top:35px;" width="18" height="16" viewBox="0 0 18 16"><path d="M0 13h5M3.5 11L5.5 13L3.5 15M8 1.5h9M8 4h8M8 6.5h9M8 9h8" stroke="#e0e0e0" stroke-width="1" fill="none"/><rect x="7" y="10.5" width="10" height="4.5" fill="#e0e0e0"/><path d="M8.5 12.8h7" stroke="#555" stroke-width="1" stroke-dasharray="1 1"/></svg>
<div class="st" style="left:1342px;top:36.5px;width:13.5px;height:14px;"></div>
<svg class="i" style="left:1342px;top:36.5px;" width="13.5" height="14" viewBox="0 0 13.5 14"><rect x="1" y="6.5" width="11.5" height="1" fill="#333"/><polygon points="3.55,5.3 9.95,5.3 6.75,1.8" fill="#f0f0f0"/><polygon points="3.55,8.7 9.95,8.7 6.75,12.2" fill="#f0f0f0"/></svg>
<div class="f" style="left:1357.5px;top:36.5px;width:47.5px;height:14px;"></div>
<span class="t" style="left:1360.5px;top:37.5px;font-size:9.2px;line-height:13px;color:#050505;font-weight:normal;-webkit-text-stroke:0.25px #111;">0 mm</span>
<svg class="i" style="left:1321px;top:55px;" width="17" height="17" viewBox="0 0 17 17"><text x="0" y="11" font-family="Liberation Sans" font-size="10" fill="#e0e0e0">Aa</text><path d="M1 1.5h9M2.5 0L1 1.5L2.5 3M8.5 0L10 1.5L8.5 3M12 5.5h5M12 8h5M12 10.5h5M0 13h17M0 15.5h17" stroke="#e0e0e0" stroke-width="1" fill="none"/></svg>
<div class="st" style="left:1342px;top:57.5px;width:13.5px;height:14px;"></div>
<svg class="i" style="left:1342px;top:57.5px;" width="13.5" height="14" viewBox="0 0 13.5 14"><rect x="1" y="6.5" width="11.5" height="1" fill="#333"/><polygon points="3.55,5.3 9.95,5.3 6.75,1.8" fill="#f0f0f0"/><polygon points="3.55,8.7 9.95,8.7 6.75,12.2" fill="#f0f0f0"/></svg>
<div class="f" style="left:1357.5px;top:57.5px;width:47.5px;height:14px;"></div>
<span class="t" style="left:1360.5px;top:58.5px;font-size:9.2px;line-height:13px;color:#050505;font-weight:normal;-webkit-text-stroke:0.25px #111;">0</span>
<div style="left:1410px;top:34px;width:1px;height:39px;background:#3a3a3a;"></div>
<div style="left:1411px;top:34px;width:1px;height:39px;background:#545454;"></div>
<svg class="i" style="left:1416px;top:35px;" width="16" height="14" viewBox="0 0 16 14"><circle cx="2.2" cy="2.5" r="1.5" fill="#e0e0e0"/><circle cx="2.2" cy="9.5" r="1.5" fill="#e0e0e0"/><path d="M6 1.5h9M6 4h9M6 6.5h9M6 9h9M6 11.5h9" stroke="#e0e0e0" stroke-width="1"/></svg>
<svg class="i" style="left:1416px;top:57px;" width="16" height="15" viewBox="0 0 16 15"><text x="0" y="6.5" font-size="7.5" font-family="Liberation Sans" fill="#e0e0e0">1</text><text x="0" y="14" font-size="7.5" font-family="Liberation Sans" fill="#e0e0e0">2</text><path d="M6 2.5h9M6 5h9M6 7.5h9M6 10h9M6 12.5h9" stroke="#e0e0e0" stroke-width="1"/></svg>
<div style="left:1440px;top:34px;width:1px;height:39px;background:#3a3a3a;"></div>
<div style="left:1441px;top:34px;width:1px;height:39px;background:#545454;"></div>
<span class="t" style="left:1449.5px;top:35.5px;font-size:12.5px;line-height:14px;color:#e0e0e0;font-weight:bold;">&#182;</span>
<svg class="i" style="left:1459px;top:46px;" width="5" height="3" viewBox="0 0 5 3"><polygon points="0,0 4,0 2,2.6" fill="#e0e0e0"/></svg>
<div class="f" style="left:1470px;top:36.5px;width:118px;height:14px;"></div>
<span class="t" style="left:1473px;top:37.5px;font-size:9.2px;line-height:13px;color:#050505;font-weight:normal;-webkit-text-stroke:0.25px #111;">[Einf. Abs.]+</span>
<div class="dd" style="left:1587.5px;top:36.5px;width:13.5px;height:14px;"></div>
<svg class="i" style="left:1587.5px;top:36.5px;" width="13.5" height="14" viewBox="0 0 13.5 14"><polygon points="3.15,4.4 10.35,4.4 6.75,10.2" fill="#f2f2f2"/></svg>
<div style="left:1471px;top:58px;width:12px;height:12px;background:#5a5a5a;border:1px solid #2c2c2c;"></div>
<svg class="i" style="left:1471px;top:55px;" width="14" height="15" viewBox="0 0 14 15"><path d="M3 8.5L6 12.5L12 1.5" stroke="#f0f0f0" stroke-width="1.6" fill="none"/></svg>
<span class="t" style="left:1486px;top:59.0px;font-size:9.2px;line-height:13px;color:#eaeaea;font-weight:normal;">Silbentrennung</span>
<span class="t" style="left:1581px;top:58.0px;font-size:12px;line-height:13px;color:#e0e0e0;font-weight:bold;">&#182;</span>
<svg class="i" style="left:1589px;top:59px;" width="10" height="10" viewBox="0 0 10 10"><path d="M1 8L8 2M3 3.5L7.5 6.5M6 1.5L4.5 8" stroke="#e0e0e0" stroke-width="0.9"/></svg>
<div style="left:1606px;top:34px;width:1px;height:39px;background:#3a3a3a;"></div>
<div style="left:1607px;top:34px;width:1px;height:39px;background:#545454;"></div>
<div class="sel" style="left:1610px;top:32.5px;width:22px;height:19px;"></div>
<svg class="i" style="left:1613px;top:35px;" width="16" height="14" viewBox="0 0 16 14"><path d="M0 1.5h7M0 4h7M0 6.5h7M0 9h7M9 4h7M9 6.5h7M9 9h7M9 11.5h7" stroke="#e8e8e8" stroke-width="1"/></svg>
<svg class="i" style="left:1613px;top:58px;" width="16" height="12" viewBox="0 0 16 12"><path d="M0 1.5h7M0 4h7M0 6.5h7M0 9h7M9 1.5h7M9 4h7M9 6.5h7M9 9h7" stroke="#e0e0e0" stroke-width="1"/></svg>
<div style="left:1638px;top:34px;width:1px;height:39px;background:#3a3a3a;"></div>
<div style="left:1639px;top:34px;width:1px;height:39px;background:#545454;"></div>
<svg class="i" style="left:1645px;top:37px;" width="14" height="13" viewBox="0 0 14 13"><rect x="0.5" y="0.5" width="13" height="12" fill="none" stroke="#e0e0e0"/><path d="M5 0v13M9.5 0v13" stroke="#e0e0e0"/></svg>
<div class="st" style="left:1661px;top:36.5px;width:13px;height:14px;"></div>
<svg class="i" style="left:1661px;top:36.5px;" width="13" height="14" viewBox="0 0 13 14"><rect x="1" y="6.5" width="11" height="1" fill="#333"/><polygon points="3.3,5.3 9.7,5.3 6.5,1.8" fill="#f0f0f0"/><polygon points="3.3,8.7 9.7,8.7 6.5,12.2" fill="#f0f0f0"/></svg>
<div class="f" style="left:1676.5px;top:36.5px;width:30.5px;height:14px;"></div>
<span class="t" style="left:1680.5px;top:37.5px;font-size:9.2px;line-height:13px;color:#050505;font-weight:normal;-webkit-text-stroke:0.25px #111;">1</span>
<svg class="i" style="left:1645px;top:58px;" width="14" height="13" viewBox="0 0 14 13"><rect x="0.5" y="0.5" width="13" height="12" fill="none" stroke="#e0e0e0"/><path d="M5.5 0v13M8.5 0v13M1.5 6.5h3M9.5 6.5h3M3 5v3M11 5v3" stroke="#e0e0e0"/></svg>
<div class="st" style="left:1661px;top:57.5px;width:13px;height:14px;"></div>
<svg class="i" style="left:1661px;top:57.5px;" width="13" height="14" viewBox="0 0 13 14"><rect x="1" y="6.5" width="11" height="1" fill="#333"/><polygon points="3.3,5.3 9.7,5.3 6.5,1.8" fill="#f0f0f0"/><polygon points="3.3,8.7 9.7,8.7 6.5,12.2" fill="#f0f0f0"/></svg>
<div class="f" style="left:1676.5px;top:57.5px;width:30.5px;height:14px;"></div>
<span class="t" style="left:1679.5px;top:58.5px;font-size:9.2px;line-height:13px;color:#050505;font-weight:normal;-webkit-text-stroke:0.25px #111;">4,233</span>
<div style="left:1703px;top:62.5px;width:2px;height:4px;background:#555;"></div>
<svg class="i" style="left:1712px;top:36px;" width="16" height="15" viewBox="0 0 16 15"><path d="M1 2.5h14M1 1v3M15 1v3M0 7.5h16M0 10h6M10 10h6M0 12.5h6M10 12.5h6M0 15h6M10 15h6" stroke="#e0e0e0" stroke-width="1"/></svg>
<div class="fd" style="left:1731px;top:36.5px;width:71px;height:14px;"></div>
<span class="t" style="left:1735px;top:37.5px;font-size:9.2px;line-height:13px;color:#eaeaea;font-weight:normal;">Ohne</span>
<div style="left:1788px;top:38.5px;width:1px;height:10px;background:#3a3a3a;"></div>
<svg class="i" style="left:1788.5px;top:36.5px;" width="13.5" height="14" viewBox="0 0 13.5 14"><polygon points="3.1,4.4 10.4,4.4 6.75,10.2" fill="#f2f2f2"/></svg>
<svg class="i" style="left:1712px;top:57px;" width="9" height="17" viewBox="0 0 9 17"><path d="M1 1.5C3 1.5 4 2.5 4 4V13C4 14.5 3 15.5 1 15.5M7 1.5C5 1.5 4 2.5 4 4M7 15.5C5 15.5 4 14.5 4 13M2.5 8.5h3" stroke="#e0e0e0" stroke-width="1" fill="none"/></svg>
<span class="t" style="left:1721px;top:58.5px;font-size:9.2px;line-height:13px;color:#e0e0e0;font-weight:normal;">x:</span>
<div style="left:1731px;top:57.5px;width:71px;height:14px;background:#9a9a9a;border:1px solid #3a3a3a;"></div>
<span class="t" style="left:1735px;top:58.5px;font-size:9.2px;line-height:13px;color:#7c7c7c;font-weight:normal;">34,106 mm</span>
<div style="left:1808px;top:34px;width:1px;height:39px;background:#3a3a3a;"></div>
<div style="left:1809px;top:34px;width:1px;height:39px;background:#545454;"></div>
<svg class="i" style="left:1873px;top:45px;" width="14" height="19" viewBox="0 0 14 19"><path d="M8.5 0.5L2 9.5H6.5L4 18L12 7.5H7.5L10.5 0.5Z" fill="#e0e0e0"/></svg>
<div style="left:1895px;top:34px;width:1px;height:39px;background:#3a3a3a;"></div>
<div style="left:1896px;top:34px;width:1px;height:39px;background:#545454;"></div>
<svg class="i" style="left:1900px;top:47px;" width="16" height="10" viewBox="0 0 16 10"><polygon points="0,2 5,2 2.5,5" fill="#e0e0e0"/><path d="M6 1.5h9M6 4h9M6 6.5h9M6 9h9" stroke="#e0e0e0" stroke-width="1"/></svg>
<div style="left:0px;top:78px;width:1712px;height:19px;background:#343434;"></div>
<div style="left:34px;top:78px;width:183px;height:19px;background:linear-gradient(#4d4d4d,#444);border-right:1px solid #262626;border-left:1px solid #262626;"></div>
<svg class="i" style="left:44px;top:84px;" width="8" height="8" viewBox="0 0 8 8"><path d="M1 1L7 7M7 1L1 7" stroke="#d0d0d0" stroke-width="1.2"/></svg>
<span class="t" style="left:58px;top:81.0px;font-size:11px;line-height:14px;color:#f0f0f0;font-weight:bold;letter-spacing:-0.13px;">*a4_portrait_1s.indd @ 125 %</span>
<div style="left:0px;top:78px;width:34px;height:905px;background:#484848;"></div>
<div style="left:0px;top:78px;width:34px;height:13px;background:#2e2e2e;"></div>
<div style="left:32px;top:78px;width:2px;height:905px;background:#303030;"></div>
<div style="left:0px;top:31px;width:2px;height:952px;background:#2e2e2e;"></div>
<svg class="i" style="left:3px;top:80px;" width="12" height="8" viewBox="0 0 12 8"><polygon points="0,0.5 4,4 0,7.5" fill="#cfcfcf"/><polygon points="5,0.5 9,4 5,7.5" fill="#cfcfcf"/></svg>
<svg class="i" style="left:6px;top:93px;" width="22" height="4" viewBox="0 0 22 4"><rect x="0" y="0" width="1" height="4" fill="#1e1e1e"/><rect x="2" y="0" width="1" height="4" fill="#1e1e1e"/><rect x="4" y="0" width="1" height="4" fill="#1e1e1e"/><rect x="6" y="0" width="1" height="4" fill="#1e1e1e"/><rect x="8" y="0" width="1" height="4" fill="#1e1e1e"/><rect x="10" y="0" width="1" height="4" fill="#1e1e1e"/><rect x="12" y="0" width="1" height="4" fill="#1e1e1e"/><rect x="14" y="0" width="1" height="4" fill="#1e1e1e"/><rect x="16" y="0" width="1" height="4" fill="#1e1e1e"/><rect x="18" y="0" width="1" height="4" fill="#1e1e1e"/><rect x="20" y="0" width="1" height="4" fill="#1e1e1e"/></svg>
<svg class="i" style="left:4px;top:107.0px;" width="24" height="20" viewBox="0 0 24 20"><path d="M8 2.5L8 15.5L11 12.8L13.2 17.6L15.2 16.7L13 12L17 11.8Z" fill="#1c1c1c" stroke="#e2e2e2" stroke-width="1.2"/></svg>
<svg class="i" style="left:4px;top:127.0px;" width="24" height="20" viewBox="0 0 24 20"><path d="M8 2.5L8 15.5L11 12.8L13.2 17.6L15.2 16.7L13 12L17 11.8Z" fill="#cfcfcf"/></svg>
<svg class="i" style="left:4px;top:148.0px;" width="24" height="20" viewBox="0 0 24 20"><path d="M6 3h6.5l3.5 3.5V17H6Z" fill="#d4d4d4"/><path d="M12.5 3v3.5H16" fill="#aaa" stroke="#666" stroke-width="0.8"/><path d="M14.5 10v8l6-4Z" fill="#ededed" stroke="#484848" stroke-width="0.9"/></svg>
<svg class="i" style="left:4px;top:169.0px;" width="24" height="20" viewBox="0 0 24 20"><path d="M2.5 3.5v13M21 3.5v13" fill="none" stroke="#e2e2e2" stroke-width="1.6"/><path d="M8 10h8" stroke="#e2e2e2" stroke-width="1.3"/><polygon points="5,10 9.5,6.8 9.5,13.2" fill="#e2e2e2"/><polygon points="18.5,10 14,6.8 14,13.2" fill="#e2e2e2"/></svg>
<svg class="i" style="left:4px;top:190.0px;" width="24" height="20" viewBox="0 0 24 20"><path d="M5.5 8.5V17.5H18.5V8.5" fill="none" stroke="#e2e2e2" stroke-width="1.5"/><path d="M8 12h2M11 12h2M14 12h2M8 15h2M11 15h2M14 15h2" stroke="#e2e2e2" stroke-width="1.6"/><path d="M7.5 2L12 6.5" stroke="#e2e2e2" stroke-width="1.4" fill="none"/><polygon points="13.5,8 13.5,3.8 9.3,8" fill="#e2e2e2"/><polygon points="19,18.5 22,18.5 22,15.5" fill="#e2e2e2"/></svg>
<div style="left:4px;top:213.5px;width:24px;height:1px;background:#333;"></div>
<div class="sel" style="left:4px;top:217.5px;width:24.5px;height:21px;"></div>
<span class="t" style="left:10px;top:218.5px;font-family:'Liberation Serif',serif;font-size:19.5px;line-height:20px;color:#f0f0f0;">T</span>
<svg class="i" style="left:23px;top:232.5px;" width="3" height="3" viewBox="0 0 3 3"><polygon points="0,3 3,3 3,0" fill="#e2e2e2"/></svg>
<svg class="i" style="left:4px;top:239.5px;" width="24" height="20" viewBox="0 0 24 20"><path d="M6 17L19 3" stroke="#e2e2e2" stroke-width="1.3"/></svg>
<svg class="i" style="left:4px;top:261.0px;" width="24" height="20" viewBox="0 0 24 20"><path d="M4.5 17.5C5 12.5 7 8.5 10.5 6.5L15.5 11.5C13.5 15 9.5 17 4.5 17.5Z" fill="#d0d0d0"/><path d="M5 17L10 12" stroke="#484848" stroke-width="0.9"/><circle cx="10.5" cy="11.5" r="1" fill="#484848"/><polygon points="11.3,5.2 12.8,3.7 18.3,9.2 16.8,10.7" fill="#e2e2e2"/><polygon points="13.8,2.7 16.2,0.3 21.7,5.8 19.3,8.2" fill="#e2e2e2"/><polygon points="19,18.5 22,18.5 22,15.5" fill="#e2e2e2"/></svg>
<svg class="i" style="left:4px;top:282.0px;" width="24" height="20" viewBox="0 0 24 20"><path d="M16.5 2.5L19.5 5.5L9 16L5 17.5L6.3 13.5Z" fill="#e2e2e2"/><path d="M14.5 4.5L17.5 7.5" stroke="#484848" stroke-width="1"/><polygon points="19,18.5 22,18.5 22,15.5" fill="#e2e2e2"/></svg>
<svg class="i" style="left:4px;top:302.0px;" width="24" height="20" viewBox="0 0 24 20"><rect x="5.3" y="4.3" width="13.4" height="11.4" fill="#6a6a6a" stroke="#e2e2e2" stroke-width="1.3"/><path d="M5.3 4.3L18.7 15.7M18.7 4.3L5.3 15.7" stroke="#e2e2e2" stroke-width="0.9"/><polygon points="19,18.5 22,18.5 22,15.5" fill="#e2e2e2"/></svg>
<svg class="i" style="left:4px;top:323.0px;" width="24" height="20" viewBox="0 0 24 20"><defs><linearGradient id="tg0" x1="0" x2="0" y1="0" y2="1"><stop offset="0" stop-color="#8c8c8c"/><stop offset="1" stop-color="#666"/></linearGradient></defs><rect x="5.3" y="4.3" width="13.4" height="11.4" fill="url(#tg0)" stroke="#e2e2e2" stroke-width="1.3"/><polygon points="19,18.5 22,18.5 22,15.5" fill="#e2e2e2"/></svg>
<div style="left:4px;top:346px;width:24px;height:1px;background:#333;"></div>
<svg class="i" style="left:4px;top:350.0px;" width="24" height="20" viewBox="0 0 24 20"><circle cx="17.5" cy="6" r="2.3" fill="none" stroke="#e2e2e2" stroke-width="1.4"/><circle cx="17.5" cy="14.5" r="2.3" fill="none" stroke="#e2e2e2" stroke-width="1.4"/><path d="M15.5 7L4 13.5M15.5 13.5L4 6" stroke="#e2e2e2" stroke-width="1.6"/></svg>
<svg class="i" style="left:4px;top:371.0px;" width="24" height="20" viewBox="0 0 24 20"><rect x="8" y="4.5" width="12" height="11" fill="none" stroke="#e2e2e2" stroke-width="1.4" stroke-dasharray="2.5 1.5"/><path d="M4 2L4 12L6.5 10L8.5 14L10 13.2L8.2 9.5L11.5 9.3Z" fill="#e2e2e2"/><polygon points="19,18.5 22,18.5 22,15.5" fill="#e2e2e2"/></svg>
<svg class="i" style="left:8px;top:396px;" width="17" height="13.5" viewBox="0 0 17 13.5"><defs><linearGradient id="tg1" x1="0" x2="1"><stop offset="0" stop-color="#484848"/><stop offset="1" stop-color="#e0e0e0"/></linearGradient></defs><rect x="0.5" y="0.5" width="16" height="12.5" fill="url(#tg1)" stroke="#e2e2e2"/></svg>
<svg class="i" style="left:8px;top:417px;" width="17" height="13.5" viewBox="0 0 17 13.5"><defs><linearGradient id="tg2" x1="0" x2="0" y1="0" y2="1"><stop offset="0" stop-color="#e0e0e0"/><stop offset="1" stop-color="#5a5a5a"/></linearGradient></defs><rect x="0.5" y="0.5" width="16" height="12.5" fill="url(#tg2)" stroke="#e2e2e2"/><rect x="1.0" y="4.0" width="2" height="3" fill="#555" fill-opacity="0.35"/><rect x="5.0" y="4.0" width="2" height="3" fill="#555" fill-opacity="0.35"/><rect x="9.0" y="4.0" width="2" height="3" fill="#555" fill-opacity="0.35"/><rect x="13.0" y="4.0" width="2" height="3" fill="#555" fill-opacity="0.35"/><rect x="3.0" y="7.0" width="2" height="3" fill="#555" fill-opacity="0.55"/><rect x="7.0" y="7.0" width="2" height="3" fill="#555" fill-opacity="0.55"/><rect x="11.0" y="7.0" width="2" height="3" fill="#555" fill-opacity="0.55"/><rect x="15.0" y="7.0" width="2" height="3" fill="#555" fill-opacity="0.55"/><rect x="1.0" y="10.0" width="2" height="3" fill="#555" fill-opacity="0.75"/><rect x="5.0" y="10.0" width="2" height="3" fill="#555" fill-opacity="0.75"/><rect x="9.0" y="10.0" width="2" height="3" fill="#555" fill-opacity="0.75"/><rect x="13.0" y="10.0" width="2" height="3" fill="#555" fill-opacity="0.75"/></svg>
<div style="left:4px;top:437.5px;width:24px;height:1px;background:#333;"></div>
<svg class="i" style="left:4px;top:441.0px;" width="24" height="20" viewBox="0 0 24 20"><path d="M5 3h14v10l-4 4H5Z" fill="#e2e2e2"/><path d="M7.5 6.5h9M7.5 9h9M7.5 11.5h5" stroke="#555" stroke-width="1"/><path d="M19 13h-4v4" fill="none" stroke="#555" stroke-width="1"/></svg>
<svg class="i" style="left:4px;top:464.0px;" width="24" height="20" viewBox="0 0 24 20"><path d="M17 1.5C18.5 1 20 2.5 19.5 4L16.5 7L17.5 8L16 9.5L12 5.5L13.5 4L14.5 5Z" fill="#e2e2e2"/><path d="M13 7L6.5 13.5L6 15.5L8 15L14.5 8.5" fill="none" stroke="#e2e2e2" stroke-width="1.2"/><path d="M3 18.5h12" stroke="#e2e2e2" stroke-width="2.4" stroke-dasharray="2.2 1"/><polygon points="19,18.5 22,18.5 22,15.5" fill="#e2e2e2"/></svg>
<svg class="i" style="left:4px;top:484.0px;" width="24" height="20" viewBox="0 0 24 20"><path d="M7 18C5 15 3.5 12.5 3.5 11C3.5 9.8 5 9.6 6 11L7 12.5V5C7 3.5 9 3.5 9 5V3.5C9 2 11.2 2 11.2 3.5V4.5C11.2 3 13.4 3 13.4 4.5V6C13.4 4.7 15.5 4.7 15.5 6.2V13C15.5 15 15 16.5 14 18Z" fill="#e2e2e2"/><path d="M9 5v5M11.2 4.5v5.5M13.4 6v4" stroke="#555" stroke-width="0.8"/></svg>
<svg class="i" style="left:4px;top:504.5px;" width="24" height="20" viewBox="0 0 24 20"><circle cx="10" cy="8" r="5" fill="#6a6a6a" stroke="#e2e2e2" stroke-width="1.6"/><path d="M13.8 11.8L19.5 17.5" stroke="#e2e2e2" stroke-width="2.6"/></svg>
<div style="left:4px;top:525.5px;width:24px;height:1px;background:#333;"></div>
<div style="left:14.5px;top:540px;width:11px;height:10.5px;background:#fff;border:1px solid #ccc;"></div>
<svg class="i" style="left:14.5px;top:540px;" width="11" height="10.5" viewBox="0 0 11 10.5"><path d="M0.5 10L10.5 0.5" stroke="#e0371d" stroke-width="1.9"/></svg>
<div style="left:6.5px;top:533.3px;width:11.2px;height:10.7px;background:#fff;box-shadow:0 0 0 1px #555;"></div>
<svg class="i" style="left:20px;top:530px;" width="8" height="8" viewBox="0 0 8 8"><path d="M1 2.5C4 1.5 6 3 6 6M0.5 1L1 3L3 2.8M4.5 5L6 6.5L7.5 5" stroke="#e2e2e2" stroke-width="1" fill="none"/></svg>
<svg class="i" style="left:5px;top:553px;" width="11" height="11" viewBox="0 0 11 11"><rect x="3.5" y="3.5" width="6" height="6" fill="#222" stroke="#ddd"/><rect x="0.5" y="0.5" width="6" height="6" fill="#fff" stroke="#333"/><path d="M1 6L6 1" stroke="#e0371d" stroke-width="1"/></svg>
<div style="left:6px;top:567px;width:8px;height:8px;background:#666;border:1px solid #8a8a8a;"></div>
<div style="left:17px;top:564.5px;width:11.5px;height:13px;background:#2c2c2c;"></div>
<span class="t" style="left:18.5px;top:565px;font-family:'Liberation Serif',serif;font-weight:bold;font-size:12px;line-height:12px;color:#f0f0f0;">T</span>
<div class="sel" style="left:4px;top:582.5px;width:24.5px;height:20px;"></div>
<div style="left:10px;top:586px;width:11.5px;height:12px;background:#fff;"></div>
<svg class="i" style="left:23.5px;top:597px;" width="3" height="3" viewBox="0 0 3 3"><polygon points="0,3 3,3 3,0" fill="#e2e2e2"/></svg>
<div class="sel" style="left:4px;top:608px;width:24.5px;height:20px;"></div>
<svg class="i" style="left:10px;top:612px;" width="13" height="12" viewBox="0 0 13 12"><rect x="0.5" y="0.5" width="11" height="10" fill="none" stroke="#e2e2e2"/><rect x="0.5" y="0.5" width="11" height="2.5" fill="#e2e2e2"/></svg>
<svg class="i" style="left:23.5px;top:622.5px;" width="3" height="3" viewBox="0 0 3 3"><polygon points="0,3 3,3 3,0" fill="#e2e2e2"/></svg>
<div style="left:1694px;top:97px;width:16px;height:871px;background:#353535;"></div>
<div style="left:1694px;top:97px;width:1px;height:871px;background:#2a2a2a;"></div>
<div style="left:1695px;top:116px;width:14.5px;height:427px;background:#959595;"></div>
<svg class="i" style="left:1697px;top:102px;" width="11" height="8" viewBox="0 0 11 8"><polygon points="0,7 10,7 5,0.5" fill="#ececec"/></svg>
<svg class="i" style="left:1698px;top:957px;" width="9" height="7" viewBox="0 0 9 7"><polygon points="0,0 9,0 4.5,6" fill="#ececec"/></svg>
<div style="left:1709.5px;top:78px;width:2.5px;height:905px;background:#2a2a2a;"></div>
<div style="left:34px;top:968px;width:1676px;height:15px;background:#393939;"></div>
<div style="left:51.5px;top:970.5px;width:18.5px;height:12.5px;background:#626262;border:1px solid #7a7a7a;border-radius:3px;"></div>
<svg class="i" style="left:53px;top:972.3px;" width="16" height="10" viewBox="0 0 16 10"><circle cx="4" cy="5" r="2.3" fill="none" stroke="#e6e6e6" stroke-width="1.8" stroke-dasharray="1.4 1"/><path d="M9 3.5h4.5v4M11.5 5.5L13.5 7.8L15.5 5.5" stroke="#e6e6e6" stroke-width="1.2" fill="none"/></svg>
<svg class="i" style="left:78px;top:971.3px;" width="13" height="12" viewBox="0 0 13 12"><path d="M7 3H1.5v8h9V8" fill="none" stroke="#c8c8c8" stroke-width="1.3"/><path d="M5 8C5 5 7 3.5 9.5 3.5V1.5L13 4.5L9.5 7.5V5.5C7.5 5.5 6 6.5 5 8Z" fill="#c8c8c8"/></svg>
<svg class="i" style="left:101px;top:972.3px;" width="8" height="9" viewBox="0 0 8 9"><rect x="0" y="0" width="1.3" height="9" fill="#8a8a8a"/><polygon points="7,0 7,9 1.8,4.5" fill="#8a8a8a"/></svg>
<svg class="i" style="left:116px;top:972.3px;" width="6" height="9" viewBox="0 0 6 9"><polygon points="5.5,0 5.5,9 0.3,4.5" fill="#8a8a8a"/></svg>
<span class="t" style="left:131px;top:970.8px;font-size:9.5px;line-height:14px;color:#e8e8e8;font-weight:bold;">1</span>
<svg class="i" style="left:213px;top:974.3px;" width="8" height="6" viewBox="0 0 8 6"><polygon points="0,0 7.5,0 3.75,5.5" fill="#d8d8d8"/></svg>
<svg class="i" style="left:232px;top:972.3px;" width="6" height="9" viewBox="0 0 6 9"><polygon points="0.5,0 0.5,9 5.7,4.5" fill="#8a8a8a"/></svg>
<svg class="i" style="left:245px;top:972.3px;" width="8" height="9" viewBox="0 0 8 9"><rect x="6.2" y="0" width="1.3" height="9" fill="#8a8a8a"/><polygon points="0.5,0 0.5,9 5.7,4.5" fill="#8a8a8a"/></svg>
<svg class="i" style="left:259px;top:970.3px;" width="18" height="14" viewBox="0 0 18 14"><circle cx="7" cy="7" r="5.8" fill="none" stroke="#d0d0d0" stroke-width="1.3"/><path d="M5 4h3l1.5 1.5V10H5Z" fill="#d0d0d0"/><polygon points="13,11 17,11 15,13" fill="#d0d0d0"/></svg>
<span class="t" style="left:285px;top:971.3px;font-size:9.2px;line-height:13px;color:#6e6e6e;font-weight:normal;">[Grundprofil] (Arbeitsp...</span>
<svg class="i" style="left:391px;top:974.8px;" width="7" height="5" viewBox="0 0 7 5"><polygon points="0,0 6.5,0 3.25,4.8" fill="#777"/></svg>
<div style="left:405px;top:972px;width:10.5px;height:10.5px;border-radius:50%;background:radial-gradient(circle at 40% 35%,#777,#555);"></div>
<span class="t" style="left:419.5px;top:971.3px;font-size:9.2px;line-height:13px;color:#ececec;font-weight:normal;">Preflight aus</span>
<svg class="i" style="left:491px;top:975.3px;" width="7" height="5" viewBox="0 0 7 5"><polygon points="0,0 6,0 3,4" fill="#d8d8d8"/></svg>
<svg class="i" style="left:507px;top:972.8px;" width="7" height="9" viewBox="0 0 7 9"><polygon points="6.5,0 6.5,9 0.5,4.5" fill="#ececec"/></svg>
<div style="left:515px;top:968px;width:1157px;height:15px;background:#2f2f2f;"></div>
<div style="left:832px;top:968.5px;width:647px;height:14.5px;background:linear-gradient(#8c8c8c,#777);"></div>
<svg class="i" style="left:1660px;top:971.5px;" width="7" height="9" viewBox="0 0 7 9"><polygon points="0.5,0 0.5,9 6.5,4.5" fill="#ececec"/></svg>
<svg class="i" style="left:1677px;top:970.7px;" width="16" height="12" viewBox="0 0 16 12"><rect x="0.6" y="0.6" width="14.3" height="10.3" fill="#333" stroke="#d8d8d8" stroke-width="1.1"/><path d="M7.75 0v11" stroke="#d8d8d8" stroke-width="1.1"/></svg>
<svg class="i" style="left:1697px;top:971px;" width="12" height="12" viewBox="0 0 12 12"><rect x="0" y="10" width="1" height="1" fill="#999"/><rect x="2" y="8" width="1" height="1" fill="#999"/><rect x="2" y="10" width="1" height="1" fill="#999"/><rect x="4" y="6" width="1" height="1" fill="#999"/><rect x="4" y="8" width="1" height="1" fill="#999"/><rect x="4" y="10" width="1" height="1" fill="#999"/><rect x="6" y="4" width="1" height="1" fill="#999"/><rect x="6" y="6" width="1" height="1" fill="#999"/><rect x="6" y="8" width="1" height="1" fill="#999"/><rect x="6" y="10" width="1" height="1" fill="#999"/><rect x="8" y="2" width="1" height="1" fill="#999"/><rect x="8" y="4" width="1" height="1" fill="#999"/><rect x="8" y="6" width="1" height="1" fill="#999"/><rect x="8" y="8" width="1" height="1" fill="#999"/><rect x="8" y="10" width="1" height="1" fill="#999"/><rect x="10" y="0" width="1" height="1" fill="#999"/><rect x="10" y="2" width="1" height="1" fill="#999"/><rect x="10" y="4" width="1" height="1" fill="#999"/><rect x="10" y="6" width="1" height="1" fill="#999"/><rect x="10" y="8" width="1" height="1" fill="#999"/><rect x="10" y="10" width="1" height="1" fill="#999"/></svg>
<div style="left:241px;top:238px;width:209px;height:205px;background:#494949;border-radius:4px 4px 0 0;box-shadow:1px 3px 7px rgba(0,0,0,0.35),inset 0 0 0 1px #2e2e2e;"></div>
<div style="left:241px;top:238px;width:209px;height:14.5px;background:linear-gradient(#3a3a3a,#2e2e2e);border-radius:4px 4px 0 0;border:1px solid #262626;border-bottom:none;"></div>
<svg class="i" style="left:246.5px;top:242px;" width="7" height="7" viewBox="0 0 7 7"><path d="M0.8 0.8L6.2 6.2M6.2 0.8L0.8 6.2" stroke="#d8d8d8" stroke-width="1.2"/></svg>
<svg class="i" style="left:437px;top:242px;" width="9" height="7" viewBox="0 0 9 7"><polygon points="3.8,0 3.8,7 0,3.5" fill="#d0d0d0"/><polygon points="8.3,0 8.3,7 4.5,3.5" fill="#d0d0d0"/></svg>
<div style="left:241px;top:252.5px;width:209px;height:16.5px;background:#2d2d2d;"></div>
<div style="left:242px;top:253px;width:60px;height:16px;background:#494949;border-right:1px solid #262626;"></div>
<svg class="i" style="left:246.5px;top:255.5px;" width="6" height="11" viewBox="0 0 6 11"><path d="M0.5 4.6L3 1.6L5.5 4.6M0.5 6.4L3 9.4L5.5 6.4" stroke="#e8e8e8" stroke-width="1.1" fill="none"/></svg>
<span class="t" style="left:255px;top:254.0px;font-size:10.5px;line-height:13px;color:#f2f2f2;font-weight:bold;">Zeichen</span>
<svg class="i" style="left:431px;top:256.5px;" width="15" height="8" viewBox="0 0 15 8"><polygon points="0,1 4.6,1 2.3,3.6" fill="#d8d8d8"/><path d="M6 0.5h9M6 2.8h9M6 5.1h9M6 7.4h9" stroke="#d8d8d8" stroke-width="1"/></svg>
<div class="f" style="left:248.5px;top:277.5px;width:181px;height:14px;"></div>
<svg class="i" style="left:250.5px;top:278.5px;" width="18" height="12" viewBox="0 0 18 12"><circle cx="6.8" cy="4.8" r="3.4" fill="none" stroke="#1b1b1b" stroke-width="1.1"/><path d="M4.3 7.3L1 10.8" stroke="#1b1b1b" stroke-width="1.3"/><polygon points="12,8.5 16,8.5 14,10.8" fill="#1b1b1b"/></svg>
<span class="t" style="left:270px;top:278.0px;font-size:9.2px;line-height:13px;color:#050505;font-weight:normal;-webkit-text-stroke:0.25px #111;">Open Sans</span>
<div class="dd" style="left:429px;top:277.5px;width:13.5px;height:14px;"></div>
<svg class="i" style="left:429px;top:277.5px;" width="13.5" height="14" viewBox="0 0 13.5 14"><polygon points="3.15,4.4 10.35,4.4 6.75,10.2" fill="#f2f2f2"/></svg>
<div class="f" style="left:248.5px;top:299px;width:181px;height:14px;"></div>
<span class="t" style="left:252.0px;top:300.0px;font-size:9.2px;line-height:13px;color:#050505;font-weight:normal;-webkit-text-stroke:0.25px #111;">Semibold</span>
<div class="dd" style="left:429px;top:299px;width:13.5px;height:14px;"></div>
<svg class="i" style="left:429px;top:299px;" width="13.5" height="14" viewBox="0 0 13.5 14"><polygon points="3.15,4.4 10.35,4.4 6.75,10.2" fill="#f2f2f2"/></svg>
<div style="left:247px;top:319px;width:196px;height:1px;background:#3a3a3a;"></div>
<div style="left:247px;top:320px;width:196px;height:1px;background:#535353;"></div>
<svg class="i" style="left:245.5px;top:324.5px;" width="18" height="15" viewBox="0 0 18 15"><text x="0.5" y="14" font-family="Liberation Serif" font-size="11.5" fill="#e0e0e0">T</text><text x="4.5" y="14" font-family="Liberation Serif" font-size="18.5" fill="#e0e0e0">T</text></svg>
<div class="st" style="left:267px;top:325.5px;width:12.5px;height:14px;"></div>
<svg class="i" style="left:267px;top:325.5px;" width="12.5" height="14" viewBox="0 0 12.5 14"><rect x="1" y="6.5" width="10.5" height="1" fill="#333"/><polygon points="3.05,5.3 9.45,5.3 6.25,1.8" fill="#f0f0f0"/><polygon points="3.05,8.7 9.45,8.7 6.25,12.2" fill="#f0f0f0"/></svg>
<div class="f" style="left:281.5px;top:325.5px;width:43px;height:14px;"></div>
<span class="t" style="left:285.0px;top:326.5px;font-size:9.2px;line-height:13px;color:#050505;font-weight:normal;-webkit-text-stroke:0.25px #111;">18 Pt</span>
<div class="dd" style="left:324px;top:325.5px;width:13.5px;height:14px;"></div>
<svg class="i" style="left:324px;top:325.5px;" width="13.5" height="14" viewBox="0 0 13.5 14"><polygon points="3.15,4.4 10.35,4.4 6.75,10.2" fill="#f2f2f2"/></svg>
<svg class="i" style="left:346px;top:321.5px;" width="18" height="18" viewBox="0 0 18 18"><text x="7" y="7.5" font-family="Liberation Sans" font-size="9.5" fill="#eaeaea" stroke="#eaeaea" stroke-width="0.3">A</text><text x="7" y="16.5" font-family="Liberation Sans" font-size="9.5" fill="#eaeaea" stroke="#eaeaea" stroke-width="0.3">A</text><path d="M6 8.5h11M6 17.5h11M2.5 8v9M0.5 10.5L2.5 8L4.5 10.5M0.5 14.5L2.5 17L4.5 14.5" stroke="#e0e0e0" stroke-width="1" fill="none"/></svg>
<div class="st" style="left:367px;top:325.5px;width:12.5px;height:14px;"></div>
<svg class="i" style="left:367px;top:325.5px;" width="12.5" height="14" viewBox="0 0 12.5 14"><rect x="1" y="6.5" width="10.5" height="1" fill="#333"/><polygon points="3.05,5.3 9.45,5.3 6.25,1.8" fill="#f0f0f0"/><polygon points="3.05,8.7 9.45,8.7 6.25,12.2" fill="#f0f0f0"/></svg>
<div class="f" style="left:381.5px;top:325.5px;width:48px;height:14px;"></div>
<span class="t" style="left:385.0px;top:326.5px;font-size:9.2px;line-height:13px;color:#050505;font-weight:normal;-webkit-text-stroke:0.25px #111;">24 Pt</span>
<div class="dd" style="left:429px;top:325.5px;width:13.5px;height:14px;"></div>
<svg class="i" style="left:429px;top:325.5px;" width="13.5" height="14" viewBox="0 0 13.5 14"><polygon points="3.15,4.4 10.35,4.4 6.75,10.2" fill="#f2f2f2"/></svg>
<svg class="i" style="left:245.5px;top:345.5px;" width="20" height="17" viewBox="0 0 20 17"><text x="0" y="12" font-family="Liberation Sans" font-size="13" fill="#e0e0e0">V</text><text x="9" y="12" font-family="Liberation Sans" font-size="13" fill="#e0e0e0">A</text><path d="M11 0.5L5.5 14" stroke="#e0e0e0" stroke-width="1"/><path d="M11 15h8M13.5 13L11 15L13.5 17" stroke="#e0e0e0" stroke-width="1" fill="none"/></svg>
<div class="st" style="left:267px;top:346.5px;width:12.5px;height:14px;"></div>
<svg class="i" style="left:267px;top:346.5px;" width="12.5" height="14" viewBox="0 0 12.5 14"><rect x="1" y="6.5" width="10.5" height="1" fill="#333"/><polygon points="3.05,5.3 9.45,5.3 6.25,1.8" fill="#7d7d7d"/><polygon points="3.05,8.7 9.45,8.7 6.25,12.2" fill="#7d7d7d"/></svg>
<div class="f" style="left:281.5px;top:346.5px;width:43px;height:14px;"></div>
<span class="t" style="left:284.5px;top:347.5px;font-size:9.2px;line-height:13px;color:#050505;font-weight:normal;-webkit-text-stroke:0.25px #111;">Metrisch</span>
<div class="dd" style="left:324px;top:346.5px;width:13.5px;height:14px;"></div>
<svg class="i" style="left:324px;top:346.5px;" width="13.5" height="14" viewBox="0 0 13.5 14"><polygon points="3.15,4.4 10.35,4.4 6.75,10.2" fill="#f2f2f2"/></svg>
<svg class="i" style="left:345px;top:344.5px;" width="20" height="18" viewBox="0 0 20 18"><rect x="1" y="0.5" width="17.5" height="12" fill="#b8b8b8"/><text x="2" y="11" font-family="Liberation Sans" font-size="12" fill="#222">VA</text><path d="M1.5 15.5h17M4 13.5L1.5 15.5L4 17.5M16 13.5L18.5 15.5L16 17.5" stroke="#e0e0e0" stroke-width="1" fill="none"/></svg>
<div class="st" style="left:367px;top:346.5px;width:12.5px;height:14px;"></div>
<svg class="i" style="left:367px;top:346.5px;" width="12.5" height="14" viewBox="0 0 12.5 14"><rect x="1" y="6.5" width="10.5" height="1" fill="#333"/><polygon points="3.05,5.3 9.45,5.3 6.25,1.8" fill="#f0f0f0"/><polygon points="3.05,8.7 9.45,8.7 6.25,12.2" fill="#f0f0f0"/></svg>
<div class="f" style="left:381.5px;top:346.5px;width:48px;height:14px;"></div>
<span class="t" style="left:385.0px;top:347.5px;font-size:9.2px;line-height:13px;color:#050505;font-weight:normal;-webkit-text-stroke:0.25px #111;">20</span>
<div class="dd" style="left:429px;top:346.5px;width:13.5px;height:14px;"></div>
<svg class="i" style="left:429px;top:346.5px;" width="13.5" height="14" viewBox="0 0 13.5 14"><polygon points="3.15,4.4 10.35,4.4 6.75,10.2" fill="#f2f2f2"/></svg>
<div style="left:247px;top:367px;width:196px;height:1px;background:#3a3a3a;"></div>
<div style="left:247px;top:368px;width:196px;height:1px;background:#535353;"></div>
<svg class="i" style="left:245px;top:371.5px;" width="19" height="17" viewBox="0 0 19 17"><text x="6" y="15" font-family="Liberation Serif" font-size="19.5" fill="#e4e4e4">T</text><path d="M2.5 2v13M0.5 4.5L2.5 2L4.5 4.5M0.5 12.5L2.5 15L4.5 12.5" stroke="#e0e0e0" stroke-width="1" fill="none"/></svg>
<div class="st" style="left:267px;top:373.5px;width:12.5px;height:14px;"></div>
<svg class="i" style="left:267px;top:373.5px;" width="12.5" height="14" viewBox="0 0 12.5 14"><rect x="1" y="6.5" width="10.5" height="1" fill="#333"/><polygon points="3.05,5.3 9.45,5.3 6.25,1.8" fill="#f0f0f0"/><polygon points="3.05,8.7 9.45,8.7 6.25,12.2" fill="#f0f0f0"/></svg>
<div class="f" style="left:281.5px;top:373.5px;width:43px;height:14px;"></div>
<span class="t" style="left:285.0px;top:374.5px;font-size:9.2px;line-height:13px;color:#050505;font-weight:normal;-webkit-text-stroke:0.25px #111;">100 %</span>
<div class="dd" style="left:324px;top:373.5px;width:13.5px;height:14px;"></div>
<svg class="i" style="left:324px;top:373.5px;" width="13.5" height="14" viewBox="0 0 13.5 14"><polygon points="3.15,4.4 10.35,4.4 6.75,10.2" fill="#f2f2f2"/></svg>
<svg class="i" style="left:344px;top:370.5px;" width="20" height="19" viewBox="0 0 20 19"><text x="4" y="13.5" font-family="Liberation Serif" font-weight="bold" font-size="16.5" fill="#e0e0e0">T</text><path d="M1.5 16.5h17M4 14.5L1.5 16.5L4 18.5M16 14.5L18.5 16.5L16 18.5" stroke="#e0e0e0" stroke-width="1" fill="none"/></svg>
<div class="st" style="left:367px;top:373.5px;width:12.5px;height:14px;"></div>
<svg class="i" style="left:367px;top:373.5px;" width="12.5" height="14" viewBox="0 0 12.5 14"><rect x="1" y="6.5" width="10.5" height="1" fill="#333"/><polygon points="3.05,5.3 9.45,5.3 6.25,1.8" fill="#f0f0f0"/><polygon points="3.05,8.7 9.45,8.7 6.25,12.2" fill="#f0f0f0"/></svg>
<div class="f" style="left:381.5px;top:373.5px;width:48px;height:14px;"></div>
<span class="t" style="left:385.0px;top:374.5px;font-size:9.2px;line-height:13px;color:#050505;font-weight:normal;-webkit-text-stroke:0.25px #111;">100 %</span>
<div class="dd" style="left:429px;top:373.5px;width:13.5px;height:14px;"></div>
<svg class="i" style="left:429px;top:373.5px;" width="13.5" height="14" viewBox="0 0 13.5 14"><polygon points="3.15,4.4 10.35,4.4 6.75,10.2" fill="#f2f2f2"/></svg>
<svg class="i" style="left:246px;top:393.5px;" width="18" height="17" viewBox="0 0 18 17"><text x="0" y="11" font-family="Liberation Sans" font-size="13" fill="#e0e0e0">A</text><text x="9" y="7" font-family="Liberation Sans" font-size="9" fill="#e0e0e0">a</text><path d="M0 12.5h8M9 8.5h6M12 16.5v-6M10 12.5L12 10L14 12.5" stroke="#e0e0e0" stroke-width="1" fill="none"/></svg>
<div class="st" style="left:267px;top:394.5px;width:12.5px;height:14px;"></div>
<svg class="i" style="left:267px;top:394.5px;" width="12.5" height="14" viewBox="0 0 12.5 14"><rect x="1" y="6.5" width="10.5" height="1" fill="#333"/><polygon points="3.05,5.3 9.45,5.3 6.25,1.8" fill="#f0f0f0"/><polygon points="3.05,8.7 9.45,8.7 6.25,12.2" fill="#f0f0f0"/></svg>
<div class="f" style="left:281.5px;top:394.5px;width:56px;height:14px;"></div>
<span class="t" style="left:284.5px;top:395.5px;font-size:9.2px;line-height:13px;color:#050505;font-weight:normal;-webkit-text-stroke:0.25px #111;">0 Pt</span>
<svg class="i" style="left:347px;top:392.5px;" width="17" height="17" viewBox="0 0 17 17"><text x="1" y="15" font-family="Liberation Serif" font-style="italic" font-weight="bold" font-size="19" fill="#e0e0e0">T</text></svg>
<div class="st" style="left:367px;top:394.5px;width:12.5px;height:14px;"></div>
<svg class="i" style="left:367px;top:394.5px;" width="12.5" height="14" viewBox="0 0 12.5 14"><rect x="1" y="6.5" width="10.5" height="1" fill="#333"/><polygon points="3.05,5.3 9.45,5.3 6.25,1.8" fill="#f0f0f0"/><polygon points="3.05,8.7 9.45,8.7 6.25,12.2" fill="#f0f0f0"/></svg>
<div class="f" style="left:381.5px;top:394.5px;width:61px;height:14px;"></div>
<span class="t" style="left:384.5px;top:395.5px;font-size:9.2px;line-height:13px;color:#050505;font-weight:normal;-webkit-text-stroke:0.25px #111;">0&#176;</span>
<div style="left:247px;top:414px;width:196px;height:1px;background:#3a3a3a;"></div>
<div style="left:247px;top:415px;width:196px;height:1px;background:#535353;"></div>
<span class="t" style="left:250px;top:422.5px;font-size:9.2px;line-height:13px;color:#e6e6e6;font-weight:normal;">Sprache:</span>
<div class="fd" style="left:293px;top:422px;width:149.5px;height:14px;"></div>
<span class="t" style="left:296px;top:423.0px;font-size:9.2px;line-height:13px;color:#eaeaea;font-weight:normal;">Deutsch: 2006 Rechtschreibr...</span>
<div style="left:429.5px;top:424px;width:1px;height:10px;background:#3a3a3a;"></div>
<svg class="i" style="left:429.5px;top:422px;" width="13" height="14" viewBox="0 0 13 14"><polygon points="3.1,4.4 10.4,4.4 6.75,10.2" fill="#f2f2f2"/></svg>
<div style="left:1377px;top:258px;width:209px;height:305px;background:#494949;border-radius:4px 4px 0 0;box-shadow:1px 3px 7px rgba(0,0,0,0.35),inset 0 0 0 1px #2e2e2e;"></div>
<div style="left:1377px;top:258px;width:209px;height:14.5px;background:linear-gradient(#3a3a3a,#2e2e2e);border-radius:4px 4px 0 0;border:1px solid #262626;border-bottom:none;"></div>
<svg class="i" style="left:1382.5px;top:262px;" width="7" height="7" viewBox="0 0 7 7"><path d="M0.8 0.8L6.2 6.2M6.2 0.8L0.8 6.2" stroke="#d8d8d8" stroke-width="1.2"/></svg>
<svg class="i" style="left:1573px;top:262px;" width="9" height="7" viewBox="0 0 9 7"><polygon points="3.8,0 3.8,7 0,3.5" fill="#d0d0d0"/><polygon points="8.3,0 8.3,7 4.5,3.5" fill="#d0d0d0"/></svg>
<div style="left:1377px;top:272.5px;width:209px;height:16.5px;background:#2d2d2d;"></div>
<div style="left:1378px;top:273px;width:72px;height:16px;background:#494949;border-right:1px solid #262626;"></div>
<svg class="i" style="left:1382px;top:275.5px;" width="6" height="11" viewBox="0 0 6 11"><path d="M0.5 4.6L3 1.6L5.5 4.6M0.5 6.4L3 9.4L5.5 6.4" stroke="#e8e8e8" stroke-width="1.1" fill="none"/></svg>
<span class="t" style="left:1391.5px;top:274.0px;font-size:10.5px;line-height:13px;color:#f2f2f2;font-weight:bold;letter-spacing:0.1px;">Farbfelder</span>
<svg class="i" style="left:1568px;top:276.5px;" width="15" height="8" viewBox="0 0 15 8"><polygon points="0,1 4.6,1 2.3,3.6" fill="#d8d8d8"/><path d="M6 0.5h9M6 2.8h9M6 5.1h9M6 7.4h9" stroke="#d8d8d8" stroke-width="1"/></svg>
<div style="left:1391.5px;top:300.5px;width:11px;height:10.5px;background:#fff;border:1px solid #ccc;"></div>
<svg class="i" style="left:1391.5px;top:300.5px;" width="11" height="10.5" viewBox="0 0 11 10.5"><path d="M0.5 10L10.5 0.5" stroke="#e0371d" stroke-width="1.8"/></svg>
<div style="left:1383.5px;top:293px;width:11px;height:10.5px;background:#fff;border:1px solid #333;box-shadow:0 0 0 0.5px #aaa;"></div>
<svg class="i" style="left:1396px;top:291px;" width="8" height="8" viewBox="0 0 8 8"><path d="M1 2.5C4 1.5 6 3 6 6M0.5 1L1 3L3 2.8M4.5 5L6 6.5L7.5 5" stroke="#ddd" stroke-width="0.9" fill="none"/></svg>
<div style="left:1417.5px;top:299px;width:8.5px;height:8.5px;background:#5a5a5a;border:1px solid #8a8a8a;"></div>
<div style="left:1429px;top:295.5px;width:14px;height:14px;background:#2c2c2c;"></div>
<span class="t" style="left:1432px;top:296px;font-family:'Liberation Serif',serif;font-weight:bold;font-size:13px;line-height:13px;color:#f0f0f0;">T</span>
<span class="t" style="left:1471.5px;top:296.0px;font-size:9.2px;line-height:13px;color:#e6e6e6;font-weight:normal;">Farbton:</span>
<div style="left:1509.5px;top:295.5px;width:30px;height:11.5px;background:#a0a0a0;border:1px solid #2c2c2c;"></div>
<span class="t" style="left:1512.5px;top:295.0px;font-size:9.2px;line-height:13px;color:#666;font-weight:normal;">100</span>
<div style="left:1539px;top:295.5px;width:14px;height:11.5px;background:#5a5a5a;border:1px solid #2c2c2c;"></div>
<svg class="i" style="left:1539px;top:295.5px;" width="14" height="11.5" viewBox="0 0 14 11.5"><polygon points="5,2.5 9.5,5.75 5,9" fill="#8a8a8a"/></svg>
<span class="t" style="left:1556px;top:296.0px;font-size:9.2px;line-height:13px;color:#e6e6e6;font-weight:normal;">%</span>
<div style="left:1378px;top:314.5px;width:194px;height:221px;background:#464646;border-top:1px solid #2c2c2c;"></div>
<div style="left:1378px;top:334.0px;width:194px;height:1px;background:#383838;"></div>
<div style="left:1378px;top:354.0px;width:194px;height:1px;background:#383838;"></div>
<div style="left:1378px;top:374.0px;width:194px;height:1px;background:#383838;"></div>
<div style="left:1378px;top:394.0px;width:194px;height:1px;background:#383838;"></div>
<div style="left:1378px;top:414.0px;width:194px;height:1px;background:#383838;"></div>
<div style="left:1378px;top:434.0px;width:194px;height:1px;background:#383838;"></div>
<div style="left:1378px;top:454.0px;width:194px;height:1px;background:#383838;"></div>
<div style="left:1378px;top:474.0px;width:194px;height:1px;background:#383838;"></div>
<div style="left:1378px;top:494.0px;width:194px;height:1px;background:#383838;"></div>
<div style="left:1378px;top:514.0px;width:194px;height:1px;background:#383838;"></div>
<div style="left:1378px;top:335px;width:194px;height:19px;background:linear-gradient(#525e78,#465169);"></div>
<div style="left:1393.5px;top:318.75px;width:12.5px;height:12.5px;background:#fff;border:1px solid #111;"></div>
<svg class="i" style="left:1393.5px;top:318.75px;" width="12.5" height="12.5" viewBox="0 0 12.5 12.5"><path d="M1 11.5L11.5 1" stroke="#e0371d" stroke-width="1.6"/></svg>
<span class="t" style="left:1408px;top:320.0px;font-size:9.2px;line-height:13px;color:#e6e6e6;font-weight:normal;">[Ohne]</span>
<div style="left:1393.5px;top:338.75px;width:12.5px;height:12.5px;background:#fff;border:1px solid #111;"></div>
<span class="t" style="left:1408px;top:340.0px;font-size:9.2px;line-height:13px;color:#fff;font-weight:bold;">[Papier]</span>
<div style="left:1393.5px;top:358.75px;width:12.5px;height:12.5px;background:#050505;border:1px solid #000;"></div>
<span class="t" style="left:1408px;top:360.0px;font-size:9.2px;line-height:13px;color:#e6e6e6;font-weight:normal;">[Schwarz]</span>
<div style="left:1393.5px;top:378.75px;width:12.5px;height:12.5px;background:#050505;border:1px solid #000;"></div>
<span class="t" style="left:1408px;top:380.0px;font-size:9.2px;line-height:13px;color:#e6e6e6;font-weight:normal;">[Passermarken]</span>
<svg class="i" style="left:1379.5px;top:403px;" width="10" height="7" viewBox="0 0 10 7"><polygon points="0,0.5 9.5,0.5 4.75,6.5" fill="#e4e4e4"/></svg>
<svg class="i" style="left:1391px;top:399.5px;" width="15" height="12" viewBox="0 0 15 12"><path d="M0.5 2C0.5 1 1 0.5 2 0.5H5.5L7 2.5H13C14 2.5 14.5 3 14.5 4V10.5C14.5 11.3 14 11.5 13 11.5H2C1 11.5 0.5 11.3 0.5 10.5Z" fill="#cfcfcf"/></svg>
<span class="t" style="left:1408px;top:400.0px;font-size:9.2px;line-height:13px;color:#e6e6e6;font-weight:normal;">Corporate-Farbdesign</span>
<div style="left:1408px;top:419px;width:12.5px;height:12.5px;background:#3a88a4;border:1px solid #2e2e2e;"></div>
<span class="t" style="left:1423px;top:420.0px;font-size:9.2px;line-height:13px;color:#e6e6e6;font-weight:normal;">C=78 M=12 Y=27 K=18</span>
<div style="left:1408px;top:439px;width:12.5px;height:12.5px;background:#52b9b6;border:1px solid #2e2e2e;"></div>
<span class="t" style="left:1423px;top:440.0px;font-size:9.2px;line-height:13px;color:#e6e6e6;font-weight:normal;">C=68 M=0 Y=33 K=0</span>
<div style="left:1408px;top:459px;width:12.5px;height:12.5px;background:#f3f1ec;border:1px solid #2e2e2e;"></div>
<span class="t" style="left:1423px;top:460.0px;font-size:9.2px;line-height:13px;color:#e6e6e6;font-weight:normal;">C=6 M=5 Y=9 K=0</span>
<div style="left:1408px;top:479px;width:12.5px;height:12.5px;background:#ef7b5a;border:1px solid #2e2e2e;"></div>
<span class="t" style="left:1423px;top:480.0px;font-size:9.2px;line-height:13px;color:#e6e6e6;font-weight:normal;">C=0 M=62 Y=64 K=0</span>
<div style="left:1408px;top:499px;width:12.5px;height:12.5px;background:#e8431f;border:1px solid #2e2e2e;"></div>
<span class="t" style="left:1423px;top:500.0px;font-size:9.2px;line-height:13px;color:#e6e6e6;font-weight:normal;">C=0 M=84 Y=90 K=0</span>
<svg class="i" style="left:1524px;top:320px;" width="12" height="12" viewBox="0 0 12 12"><path d="M1 1L11 11" stroke="#e6e6e6" stroke-width="1.1"/><path d="M8.5 1L11 3.5L4 10.5L1 11.5L2 8Z" fill="none" stroke="#e6e6e6" stroke-width="1"/><circle cx="10" cy="2" r="1.5" fill="#e6e6e6"/></svg>
<div style="left:1555.5px;top:320.5px;width:12px;height:11.5px;background:#f0f0f0;border:1px solid #ccc;"></div>
<svg class="i" style="left:1555.5px;top:320.5px;" width="12" height="11.5" viewBox="0 0 12 11.5"><path d="M1.5 10L10.5 1.5" stroke="#e0371d" stroke-width="1.5"/></svg>
<svg class="i" style="left:1524px;top:360px;" width="12" height="12" viewBox="0 0 12 12"><path d="M1 1L11 11" stroke="#e6e6e6" stroke-width="1.1"/><path d="M8.5 1L11 3.5L4 10.5L1 11.5L2 8Z" fill="none" stroke="#e6e6e6" stroke-width="1"/><circle cx="10" cy="2" r="1.5" fill="#e6e6e6"/></svg>
<div style="left:1540px;top:360.5px;width:11.5px;height:11.5px;background:#8d8d8d;border:1px solid #d0d0d0;"></div>
<svg class="i" style="left:1540px;top:360.5px;" width="11.5" height="11.5" viewBox="0 0 11.5 11.5"><rect x="2" y="2" width="1" height="1" fill="#666"/><rect x="2" y="4" width="1" height="1" fill="#666"/><rect x="2" y="6" width="1" height="1" fill="#666"/><rect x="2" y="8" width="1" height="1" fill="#666"/><rect x="4" y="2" width="1" height="1" fill="#666"/><rect x="4" y="4" width="1" height="1" fill="#666"/><rect x="4" y="6" width="1" height="1" fill="#666"/><rect x="4" y="8" width="1" height="1" fill="#666"/><rect x="6" y="2" width="1" height="1" fill="#666"/><rect x="6" y="4" width="1" height="1" fill="#666"/><rect x="6" y="6" width="1" height="1" fill="#666"/><rect x="6" y="8" width="1" height="1" fill="#666"/><rect x="8" y="2" width="1" height="1" fill="#666"/><rect x="8" y="4" width="1" height="1" fill="#666"/><rect x="8" y="6" width="1" height="1" fill="#666"/><rect x="8" y="8" width="1" height="1" fill="#666"/></svg>
<svg class="i" style="left:1555.5px;top:360px;" width="12.5" height="12.5" viewBox="0 0 12.5 12.5"><rect x="0.5" y="0.5" width="11.5" height="11.5" fill="#fff" stroke="#e8e8e8"/><polygon points="0.5,0.5 12,0.5 6.25,6.25" fill="#d63bd0"/><polygon points="12,0.5 12,12 6.25,6.25" fill="#f5e82a"/><polygon points="0.5,12 12,12 6.25,6.25" fill="#111"/><polygon points="0.5,0.5 0.5,12 6.25,6.25" fill="#29c3ee"/></svg>
<svg class="i" style="left:1524px;top:380px;" width="12" height="12" viewBox="0 0 12 12"><path d="M1 1L11 11" stroke="#e6e6e6" stroke-width="1.1"/><path d="M8.5 1L11 3.5L4 10.5L1 11.5L2 8Z" fill="none" stroke="#e6e6e6" stroke-width="1"/><circle cx="10" cy="2" r="1.5" fill="#e6e6e6"/></svg>
<div style="left:1555.5px;top:380.5px;width:12px;height:11.5px;background:#c8c8c8;border:1px solid #e0e0e0;"></div>
<svg class="i" style="left:1555.5px;top:380.5px;" width="12" height="11.5" viewBox="0 0 12 11.5"><circle cx="6" cy="5.75" r="2.6" fill="none" stroke="#333" stroke-width="0.9"/><path d="M6 1.5v8.5M1.8 5.75h8.4" stroke="#333" stroke-width="0.9"/></svg>
<div style="left:1540px;top:420.5px;width:11.5px;height:11.5px;background:#8d8d8d;border:1px solid #d0d0d0;"></div>
<svg class="i" style="left:1540px;top:420.5px;" width="11.5" height="11.5" viewBox="0 0 11.5 11.5"><rect x="2" y="2" width="1" height="1" fill="#666"/><rect x="2" y="4" width="1" height="1" fill="#666"/><rect x="2" y="6" width="1" height="1" fill="#666"/><rect x="2" y="8" width="1" height="1" fill="#666"/><rect x="4" y="2" width="1" height="1" fill="#666"/><rect x="4" y="4" width="1" height="1" fill="#666"/><rect x="4" y="6" width="1" height="1" fill="#666"/><rect x="4" y="8" width="1" height="1" fill="#666"/><rect x="6" y="2" width="1" height="1" fill="#666"/><rect x="6" y="4" width="1" height="1" fill="#666"/><rect x="6" y="6" width="1" height="1" fill="#666"/><rect x="6" y="8" width="1" height="1" fill="#666"/><rect x="8" y="2" width="1" height="1" fill="#666"/><rect x="8" y="4" width="1" height="1" fill="#666"/><rect x="8" y="6" width="1" height="1" fill="#666"/><rect x="8" y="8" width="1" height="1" fill="#666"/></svg>
<svg class="i" style="left:1555.5px;top:420px;" width="12.5" height="12.5" viewBox="0 0 12.5 12.5"><rect x="0.5" y="0.5" width="11.5" height="11.5" fill="#fff" stroke="#e8e8e8"/><polygon points="0.5,0.5 12,0.5 6.25,6.25" fill="#d63bd0"/><polygon points="12,0.5 12,12 6.25,6.25" fill="#f5e82a"/><polygon points="0.5,12 12,12 6.25,6.25" fill="#111"/><polygon points="0.5,0.5 0.5,12 6.25,6.25" fill="#29c3ee"/></svg>
<div style="left:1540px;top:440.5px;width:11.5px;height:11.5px;background:#8d8d8d;border:1px solid #d0d0d0;"></div>
<svg class="i" style="left:1540px;top:440.5px;" width="11.5" height="11.5" viewBox="0 0 11.5 11.5"><rect x="2" y="2" width="1" height="1" fill="#666"/><rect x="2" y="4" width="1" height="1" fill="#666"/><rect x="2" y="6" width="1" height="1" fill="#666"/><rect x="2" y="8" width="1" height="1" fill="#666"/><rect x="4" y="2" width="1" height="1" fill="#666"/><rect x="4" y="4" width="1" height="1" fill="#666"/><rect x="4" y="6" width="1" height="1" fill="#666"/><rect x="4" y="8" width="1" height="1" fill="#666"/><rect x="6" y="2" width="1" height="1" fill="#666"/><rect x="6" y="4" width="1" height="1" fill="#666"/><rect x="6" y="6" width="1" height="1" fill="#666"/><rect x="6" y="8" width="1" height="1" fill="#666"/><rect x="8" y="2" width="1" height="1" fill="#666"/><rect x="8" y="4" width="1" height="1" fill="#666"/><rect x="8" y="6" width="1" height="1" fill="#666"/><rect x="8" y="8" width="1" height="1" fill="#666"/></svg>
<svg class="i" style="left:1555.5px;top:440px;" width="12.5" height="12.5" viewBox="0 0 12.5 12.5"><rect x="0.5" y="0.5" width="11.5" height="11.5" fill="#fff" stroke="#e8e8e8"/><polygon points="0.5,0.5 12,0.5 6.25,6.25" fill="#d63bd0"/><polygon points="12,0.5 12,12 6.25,6.25" fill="#f5e82a"/><polygon points="0.5,12 12,12 6.25,6.25" fill="#111"/><polygon points="0.5,0.5 0.5,12 6.25,6.25" fill="#29c3ee"/></svg>
<div style="left:1540px;top:460.5px;width:11.5px;height:11.5px;background:#8d8d8d;border:1px solid #d0d0d0;"></div>
<svg class="i" style="left:1540px;top:460.5px;" width="11.5" height="11.5" viewBox="0 0 11.5 11.5"><rect x="2" y="2" width="1" height="1" fill="#666"/><rect x="2" y="4" width="1" height="1" fill="#666"/><rect x="2" y="6" width="1" height="1" fill="#666"/><rect x="2" y="8" width="1" height="1" fill="#666"/><rect x="4" y="2" width="1" height="1" fill="#666"/><rect x="4" y="4" width="1" height="1" fill="#666"/><rect x="4" y="6" width="1" height="1" fill="#666"/><rect x="4" y="8" width="1" height="1" fill="#666"/><rect x="6" y="2" width="1" height="1" fill="#666"/><rect x="6" y="4" width="1" height="1" fill="#666"/><rect x="6" y="6" width="1" height="1" fill="#666"/><rect x="6" y="8" width="1" height="1" fill="#666"/><rect x="8" y="2" width="1" height="1" fill="#666"/><rect x="8" y="4" width="1" height="1" fill="#666"/><rect x="8" y="6" width="1" height="1" fill="#666"/><rect x="8" y="8" width="1" height="1" fill="#666"/></svg>
<svg class="i" style="left:1555.5px;top:460px;" width="12.5" height="12.5" viewBox="0 0 12.5 12.5"><rect x="0.5" y="0.5" width="11.5" height="11.5" fill="#fff" stroke="#e8e8e8"/><polygon points="0.5,0.5 12,0.5 6.25,6.25" fill="#d63bd0"/><polygon points="12,0.5 12,12 6.25,6.25" fill="#f5e82a"/><polygon points="0.5,12 12,12 6.25,6.25" fill="#111"/><polygon points="0.5,0.5 0.5,12 6.25,6.25" fill="#29c3ee"/></svg>
<div style="left:1540px;top:480.5px;width:11.5px;height:11.5px;background:#8d8d8d;border:1px solid #d0d0d0;"></div>
<svg class="i" style="left:1540px;top:480.5px;" width="11.5" height="11.5" viewBox="0 0 11.5 11.5"><rect x="2" y="2" width="1" height="1" fill="#666"/><rect x="2" y="4" width="1" height="1" fill="#666"/><rect x="2" y="6" width="1" height="1" fill="#666"/><rect x="2" y="8" width="1" height="1" fill="#666"/><rect x="4" y="2" width="1" height="1" fill="#666"/><rect x="4" y="4" width="1" height="1" fill="#666"/><rect x="4" y="6" width="1" height="1" fill="#666"/><rect x="4" y="8" width="1" height="1" fill="#666"/><rect x="6" y="2" width="1" height="1" fill="#666"/><rect x="6" y="4" width="1" height="1" fill="#666"/><rect x="6" y="6" width="1" height="1" fill="#666"/><rect x="6" y="8" width="1" height="1" fill="#666"/><rect x="8" y="2" width="1" height="1" fill="#666"/><rect x="8" y="4" width="1" height="1" fill="#666"/><rect x="8" y="6" width="1" height="1" fill="#666"/><rect x="8" y="8" width="1" height="1" fill="#666"/></svg>
<svg class="i" style="left:1555.5px;top:480px;" width="12.5" height="12.5" viewBox="0 0 12.5 12.5"><rect x="0.5" y="0.5" width="11.5" height="11.5" fill="#fff" stroke="#e8e8e8"/><polygon points="0.5,0.5 12,0.5 6.25,6.25" fill="#d63bd0"/><polygon points="12,0.5 12,12 6.25,6.25" fill="#f5e82a"/><polygon points="0.5,12 12,12 6.25,6.25" fill="#111"/><polygon points="0.5,0.5 0.5,12 6.25,6.25" fill="#29c3ee"/></svg>
<div style="left:1540px;top:500.5px;width:11.5px;height:11.5px;background:#8d8d8d;border:1px solid #d0d0d0;"></div>
<svg class="i" style="left:1540px;top:500.5px;" width="11.5" height="11.5" viewBox="0 0 11.5 11.5"><rect x="2" y="2" width="1" height="1" fill="#666"/><rect x="2" y="4" width="1" height="1" fill="#666"/><rect x="2" y="6" width="1" height="1" fill="#666"/><rect x="2" y="8" width="1" height="1" fill="#666"/><rect x="4" y="2" width="1" height="1" fill="#666"/><rect x="4" y="4" width="1" height="1" fill="#666"/><rect x="4" y="6" width="1" height="1" fill="#666"/><rect x="4" y="8" width="1" height="1" fill="#666"/><rect x="6" y="2" width="1" height="1" fill="#666"/><rect x="6" y="4" width="1" height="1" fill="#666"/><rect x="6" y="6" width="1" height="1" fill="#666"/><rect x="6" y="8" width="1" height="1" fill="#666"/><rect x="8" y="2" width="1" height="1" fill="#666"/><rect x="8" y="4" width="1" height="1" fill="#666"/><rect x="8" y="6" width="1" height="1" fill="#666"/><rect x="8" y="8" width="1" height="1" fill="#666"/></svg>
<svg class="i" style="left:1555.5px;top:500px;" width="12.5" height="12.5" viewBox="0 0 12.5 12.5"><rect x="0.5" y="0.5" width="11.5" height="11.5" fill="#fff" stroke="#e8e8e8"/><polygon points="0.5,0.5 12,0.5 6.25,6.25" fill="#d63bd0"/><polygon points="12,0.5 12,12 6.25,6.25" fill="#f5e82a"/><polygon points="0.5,12 12,12 6.25,6.25" fill="#111"/><polygon points="0.5,0.5 0.5,12 6.25,6.25" fill="#29c3ee"/></svg>
<div style="left:1572px;top:314.5px;width:13.5px;height:221px;background:#3c3c3c;border-left:1px solid #2c2c2c;"></div>
<svg class="i" style="left:1575px;top:321px;" width="8" height="6" viewBox="0 0 8 6"><polygon points="0,5.5 8,5.5 4,0" fill="#6a6a6a"/></svg>
<svg class="i" style="left:1575px;top:525px;" width="8" height="6" viewBox="0 0 8 6"><polygon points="0,0 8,0 4,5.5" fill="#6a6a6a"/></svg>
<div style="left:1378px;top:535.5px;width:208px;height:1px;background:#2c2c2c;"></div>
<svg class="i" style="left:1456px;top:539.5px;" width="15" height="12" viewBox="0 0 15 12"><rect x="0.0" y="0.0" width="2.4" height="2.4" fill="#d8d8d8"/><rect x="0.0" y="3.2" width="2.4" height="2.4" fill="#d8d8d8"/><rect x="0.0" y="6.4" width="2.4" height="2.4" fill="#d8d8d8"/><rect x="3.2" y="0.0" width="2.4" height="2.4" fill="#d8d8d8"/><rect x="3.2" y="3.2" width="2.4" height="2.4" fill="#d8d8d8"/><rect x="3.2" y="6.4" width="2.4" height="2.4" fill="#d8d8d8"/><rect x="6.4" y="0.0" width="2.4" height="2.4" fill="#d8d8d8"/><rect x="6.4" y="3.2" width="2.4" height="2.4" fill="#d8d8d8"/><rect x="6.4" y="6.4" width="2.4" height="2.4" fill="#d8d8d8"/><polygon points="10.5,8.5 14.5,8.5 12.5,11" fill="#d8d8d8"/></svg>
<svg class="i" style="left:1487.5px;top:540px;" width="13" height="11" viewBox="0 0 13 11"><path d="M0.5 2C0.5 1 1 0.5 2 0.5H4.5L6 2H11.5C12.3 2 12.5 2.4 12.5 3V9.5C12.5 10.3 12.3 10.5 11.5 10.5H1.5C0.8 10.5 0.5 10.3 0.5 9.5Z" fill="#d0d0d0"/></svg>
<svg class="i" style="left:1518.5px;top:540px;" width="11" height="11" viewBox="0 0 11 11"><path d="M0 0H11V11H4.5V6.5H0Z" fill="#7a7a7a"/><path d="M0 6.5L4.5 11V6.5Z" fill="#5a5a5a"/></svg>
<svg class="i" style="left:1548px;top:539.5px;" width="11" height="12" viewBox="0 0 11 12"><path d="M0.5 2.8h10M3.8 2.5V1h3.4v1.5" stroke="#8a8a8a" stroke-width="1" fill="none"/><path d="M1.5 4h8l-.7 7.5H2.2Z" fill="none" stroke="#8a8a8a" stroke-width="1"/><path d="M4 5v5.5M5.5 5v5.5M7 5v5.5" stroke="#8a8a8a" stroke-width="0.9"/></svg>
<svg class="i" style="left:1575px;top:543px;" width="10" height="10" viewBox="0 0 10 10"><rect x="0" y="8" width="1" height="1" fill="#8a8a8a"/><rect x="2" y="6" width="1" height="1" fill="#8a8a8a"/><rect x="2" y="8" width="1" height="1" fill="#8a8a8a"/><rect x="4" y="4" width="1" height="1" fill="#8a8a8a"/><rect x="4" y="6" width="1" height="1" fill="#8a8a8a"/><rect x="4" y="8" width="1" height="1" fill="#8a8a8a"/><rect x="6" y="2" width="1" height="1" fill="#8a8a8a"/><rect x="6" y="4" width="1" height="1" fill="#8a8a8a"/><rect x="6" y="6" width="1" height="1" fill="#8a8a8a"/><rect x="6" y="8" width="1" height="1" fill="#8a8a8a"/><rect x="8" y="0" width="1" height="1" fill="#8a8a8a"/><rect x="8" y="2" width="1" height="1" fill="#8a8a8a"/><rect x="8" y="4" width="1" height="1" fill="#8a8a8a"/><rect x="8" y="6" width="1" height="1" fill="#8a8a8a"/><rect x="8" y="8" width="1" height="1" fill="#8a8a8a"/></svg>
<div style="left:1378px;top:554.5px;width:208px;height:1px;background:#2c2c2c;"></div>
<div style="left:1378px;top:555.5px;width:208px;height:7.5px;background:#3e3e3e;"></div>
<svg class="i" style="left:1471.5px;top:557px;" width="21" height="4" viewBox="0 0 21 4"><rect x="0" y="0" width="1" height="4" fill="#151515"/><rect x="2" y="0" width="1" height="4" fill="#151515"/><rect x="4" y="0" width="1" height="4" fill="#151515"/><rect x="6" y="0" width="1" height="4" fill="#151515"/><rect x="8" y="0" width="1" height="4" fill="#151515"/><rect x="10" y="0" width="1" height="4" fill="#151515"/><rect x="12" y="0" width="1" height="4" fill="#151515"/><rect x="14" y="0" width="1" height="4" fill="#151515"/><rect x="16" y="0" width="1" height="4" fill="#151515"/><rect x="18" y="0" width="1" height="4" fill="#151515"/></svg>
<div style="left:1712px;top:78px;width:208px;height:905px;background:#484848;"></div>
<div style="left:1712px;top:78px;width:208px;height:12px;background:#343434;"></div>
<svg class="i" style="left:1907px;top:80.5px;" width="10" height="7" viewBox="0 0 10 7"><polygon points="0.5,0 0.5,7 4.3,3.5" fill="#cfcfcf"/><polygon points="5.2,0 5.2,7 9,3.5" fill="#cfcfcf"/></svg>
<div style="left:1712px;top:90px;width:208px;height:16.5px;background:#2d2d2d;border-top:1px solid #262626;"></div>
<div style="left:1712px;top:91px;width:38px;height:15.5px;background:#3b3b3b;border-right:1px solid #262626;"></div>
<span class="t" style="left:1719px;top:92.05px;font-size:10.5px;line-height:13px;color:#b4b4b4;font-weight:bold;letter-spacing:-0.42px;">Seiten</span>
<div style="left:1750px;top:91px;width:73.5px;height:15.5px;background:#3b3b3b;border-right:1px solid #262626;"></div>
<span class="t" style="left:1756px;top:92.05px;font-size:10.5px;line-height:13px;color:#b4b4b4;font-weight:bold;letter-spacing:0.17px;">Verkn&#252;pfung</span>
<div style="left:1823.5px;top:90.5px;width:55.5px;height:16.0px;background:#484848;border-right:1px solid #262626;border-left:1px solid #262626;"></div>
<svg class="i" style="left:1828px;top:93px;" width="6" height="11" viewBox="0 0 6 11"><path d="M0.5 4.6L3 1.6L5.5 4.6M0.5 6.4L3 9.4L5.5 6.4" stroke="#e8e8e8" stroke-width="1.1" fill="none"/></svg>
<span class="t" style="left:1837px;top:92.05px;font-size:10.5px;line-height:13px;color:#f2f2f2;font-weight:bold;letter-spacing:-0.3px;">Ebenen</span>
<svg class="i" style="left:1901px;top:94.5px;" width="15" height="8" viewBox="0 0 15 8"><polygon points="0,1 4.6,1 2.3,3.6" fill="#d8d8d8"/><path d="M6 0.5h9M6 2.8h9M6 5.1h9M6 7.4h9" stroke="#d8d8d8" stroke-width="1"/></svg>
<div style="left:1712px;top:109px;width:195px;height:228px;background:#484848;"></div>
<div style="left:1712px;top:109px;width:195px;height:1px;background:#363636;"></div>
<div style="left:1754px;top:110px;width:153px;height:18px;background:linear-gradient(#505c76,#46516a);"></div>
<svg class="i" style="left:1757px;top:116px;" width="10" height="7" viewBox="0 0 10 7"><polygon points="0,0.5 9.5,0.5 4.75,6.5" fill="#e8e8e8"/></svg>
<span class="t" style="left:1768px;top:112.5px;font-size:9px;line-height:13px;color:#fff;font-weight:bold;">Meine Ebene</span>
<svg class="i" style="left:1870px;top:111px;" width="15" height="15" viewBox="0 0 15 15"><path d="M9.5 0.8L14 5.3L12 7C11.5 10 9 12 3 13.8L2.5 13.3C4 9 5.5 5.5 8 4.5Z" fill="#d8d8d8"/><path d="M3 13.5L7.5 9" stroke="#4c5870" stroke-width="1"/><circle cx="8" cy="8.5" r="1" fill="#4c5870"/></svg>
<svg class="i" style="left:1715.5px;top:114.5px;" width="13" height="9" viewBox="0 0 13 9"><path d="M0.6 4.5C3 0.5 10 0.5 12.4 4.5C10 8.5 3 8.5 0.6 4.5Z" fill="#bdbdbd" stroke="#e2e2e2" stroke-width="1"/><circle cx="6.5" cy="4.4" r="2.7" fill="#2c2c2c"/><circle cx="6.5" cy="4.4" r="2.7" fill="none" stroke="#d8d8d8" stroke-width="0.5"/><circle cx="7.4" cy="3.5" r="0.8" fill="#e8e8e8"/></svg>
<div style="left:1750px;top:110px;width:3.5px;height:17.5px;background:#4a8df0;"></div>
<div style="left:1893px;top:115.5px;width:7.5px;height:7.5px;border:1px solid #2c2c2c;background:#566079;"></div>
<div style="left:1712px;top:128px;width:195px;height:1px;background:#363636;"></div>
<span class="t" style="left:1779px;top:131.5px;font-size:9.2px;line-height:13px;color:#e6e6e6;font-weight:normal;letter-spacing:-0.02px;">&lt;Ihr pe...nsprechpartne...&gt;</span>
<div style="left:1750px;top:129px;width:3.5px;height:17.5px;background:#4a8df0;"></div>
<div style="left:1893px;top:134.5px;width:7.5px;height:7.5px;border:1px solid #2c2c2c;background:#4e4e4e;"></div>
<div style="left:1712px;top:147px;width:195px;height:1px;background:#363636;"></div>
<span class="t" style="left:1779px;top:150.5px;font-size:9.2px;line-height:13px;color:#e6e6e6;font-weight:normal;letter-spacing:-0.02px;">&lt;Dachde...meisterbetrieb&gt;</span>
<svg class="i" style="left:1715.5px;top:152.5px;" width="13" height="9" viewBox="0 0 13 9"><path d="M0.6 4.5C3 0.5 10 0.5 12.4 4.5C10 8.5 3 8.5 0.6 4.5Z" fill="#bdbdbd" stroke="#e2e2e2" stroke-width="1"/><circle cx="6.5" cy="4.4" r="2.7" fill="#2c2c2c"/><circle cx="6.5" cy="4.4" r="2.7" fill="none" stroke="#d8d8d8" stroke-width="0.5"/><circle cx="7.4" cy="3.5" r="0.8" fill="#e8e8e8"/></svg>
<div style="left:1750px;top:148px;width:3.5px;height:17.5px;background:#4a8df0;"></div>
<div style="left:1893px;top:153.5px;width:7.5px;height:7.5px;border:1px solid #2c2c2c;background:#4e4e4e;"></div>
<div style="left:1712px;top:166px;width:195px;height:1px;background:#363636;"></div>
<span class="t" style="left:1779px;top:169.5px;font-size:9.2px;line-height:13px;color:#e6e6e6;font-weight:normal;letter-spacing:-0.02px;">&lt;FirmaA...nerAdressePL...&gt;</span>
<div style="left:1750px;top:167px;width:3.5px;height:17.5px;background:#4a8df0;"></div>
<div style="left:1893px;top:172.5px;width:7.5px;height:7.5px;border:1px solid #2c2c2c;background:#4e4e4e;"></div>
<div style="left:1712px;top:185px;width:195px;height:1px;background:#363636;"></div>
<span class="t" style="left:1779px;top:188.5px;font-size:9.2px;line-height:13px;color:#e6e6e6;font-weight:normal;letter-spacing:-0.02px;">&lt;Wolfga...usterweg 123...&gt;</span>
<div style="left:1750px;top:186px;width:3.5px;height:17.5px;background:#4a8df0;"></div>
<div style="left:1893px;top:191.5px;width:7.5px;height:7.5px;border:1px solid #2c2c2c;background:#4e4e4e;"></div>
<div style="left:1712px;top:204px;width:195px;height:1px;background:#363636;"></div>
<span class="t" style="left:1779px;top:207.5px;font-size:9.2px;line-height:13px;color:#e6e6e6;font-weight:normal;letter-spacing:-0.02px;">&lt;ANFRAG...Damen und ...&gt;</span>
<div style="left:1750px;top:205px;width:3.5px;height:17.5px;background:#4a8df0;"></div>
<div style="left:1893px;top:210.5px;width:7.5px;height:7.5px;border:1px solid #2c2c2c;background:#4e4e4e;"></div>
<div style="left:1712px;top:223px;width:195px;height:1px;background:#363636;"></div>
<span class="t" style="left:1779px;top:226.5px;font-size:9.2px;line-height:13px;color:#e6e6e6;font-weight:normal;letter-spacing:-0.02px;">&lt;Linie&gt;</span>
<svg class="i" style="left:1715.5px;top:228.5px;" width="13" height="9" viewBox="0 0 13 9"><path d="M0.6 4.5C3 0.5 10 0.5 12.4 4.5C10 8.5 3 8.5 0.6 4.5Z" fill="#bdbdbd" stroke="#e2e2e2" stroke-width="1"/><circle cx="6.5" cy="4.4" r="2.7" fill="#2c2c2c"/><circle cx="6.5" cy="4.4" r="2.7" fill="none" stroke="#d8d8d8" stroke-width="0.5"/><circle cx="7.4" cy="3.5" r="0.8" fill="#e8e8e8"/></svg>
<div style="left:1750px;top:224px;width:3.5px;height:17.5px;background:#4a8df0;"></div>
<div style="left:1893px;top:229.5px;width:7.5px;height:7.5px;border:1px solid #2c2c2c;background:#4e4e4e;"></div>
<div style="left:1712px;top:242px;width:195px;height:1px;background:#363636;"></div>
<span class="t" style="left:1779px;top:245.5px;font-size:9.2px;line-height:13px;color:#e6e6e6;font-weight:normal;letter-spacing:-0.02px;">&lt;Linie&gt;</span>
<svg class="i" style="left:1715.5px;top:247.5px;" width="13" height="9" viewBox="0 0 13 9"><path d="M0.6 4.5C3 0.5 10 0.5 12.4 4.5C10 8.5 3 8.5 0.6 4.5Z" fill="#bdbdbd" stroke="#e2e2e2" stroke-width="1"/><circle cx="6.5" cy="4.4" r="2.7" fill="#2c2c2c"/><circle cx="6.5" cy="4.4" r="2.7" fill="none" stroke="#d8d8d8" stroke-width="0.5"/><circle cx="7.4" cy="3.5" r="0.8" fill="#e8e8e8"/></svg>
<div style="left:1750px;top:243px;width:3.5px;height:17.5px;background:#4a8df0;"></div>
<div style="left:1893px;top:248.5px;width:7.5px;height:7.5px;border:1px solid #2c2c2c;background:#4e4e4e;"></div>
<div style="left:1712px;top:261px;width:195px;height:1px;background:#363636;"></div>
<span class="t" style="left:1779px;top:264.5px;font-size:9.2px;line-height:13px;color:#e6e6e6;font-weight:normal;letter-spacing:-0.02px;">&lt;Linie&gt;</span>
<svg class="i" style="left:1715.5px;top:266.5px;" width="13" height="9" viewBox="0 0 13 9"><path d="M0.6 4.5C3 0.5 10 0.5 12.4 4.5C10 8.5 3 8.5 0.6 4.5Z" fill="#bdbdbd" stroke="#e2e2e2" stroke-width="1"/><circle cx="6.5" cy="4.4" r="2.7" fill="#2c2c2c"/><circle cx="6.5" cy="4.4" r="2.7" fill="none" stroke="#d8d8d8" stroke-width="0.5"/><circle cx="7.4" cy="3.5" r="0.8" fill="#e8e8e8"/></svg>
<div style="left:1750px;top:262px;width:3.5px;height:17.5px;background:#4a8df0;"></div>
<div style="left:1893px;top:267.5px;width:7.5px;height:7.5px;border:1px solid #2c2c2c;background:#4e4e4e;"></div>
<div style="left:1712px;top:280px;width:195px;height:1px;background:#363636;"></div>
<span class="t" style="left:1779px;top:283.5px;font-size:9.2px;line-height:13px;color:#e6e6e6;font-weight:normal;letter-spacing:-0.02px;">&lt;Quadrat&gt;</span>
<svg class="i" style="left:1715.5px;top:285.5px;" width="13" height="9" viewBox="0 0 13 9"><path d="M0.6 4.5C3 0.5 10 0.5 12.4 4.5C10 8.5 3 8.5 0.6 4.5Z" fill="#bdbdbd" stroke="#e2e2e2" stroke-width="1"/><circle cx="6.5" cy="4.4" r="2.7" fill="#2c2c2c"/><circle cx="6.5" cy="4.4" r="2.7" fill="none" stroke="#d8d8d8" stroke-width="0.5"/><circle cx="7.4" cy="3.5" r="0.8" fill="#e8e8e8"/></svg>
<div style="left:1750px;top:281px;width:3.5px;height:17.5px;background:#4a8df0;"></div>
<div style="left:1893px;top:286.5px;width:7.5px;height:7.5px;border:1px solid #2c2c2c;background:#4e4e4e;"></div>
<div style="left:1712px;top:299px;width:195px;height:1px;background:#363636;"></div>
<span class="t" style="left:1779px;top:302.5px;font-size:9.2px;line-height:13px;color:#e6e6e6;font-weight:normal;letter-spacing:-0.02px;">&lt;Quadrat&gt;</span>
<svg class="i" style="left:1715.5px;top:304.5px;" width="13" height="9" viewBox="0 0 13 9"><path d="M0.6 4.5C3 0.5 10 0.5 12.4 4.5C10 8.5 3 8.5 0.6 4.5Z" fill="#bdbdbd" stroke="#e2e2e2" stroke-width="1"/><circle cx="6.5" cy="4.4" r="2.7" fill="#2c2c2c"/><circle cx="6.5" cy="4.4" r="2.7" fill="none" stroke="#d8d8d8" stroke-width="0.5"/><circle cx="7.4" cy="3.5" r="0.8" fill="#e8e8e8"/></svg>
<div style="left:1750px;top:300px;width:3.5px;height:17.5px;background:#4a8df0;"></div>
<div style="left:1893px;top:305.5px;width:7.5px;height:7.5px;border:1px solid #2c2c2c;background:#4e4e4e;"></div>
<div style="left:1712px;top:318px;width:195px;height:1px;background:#363636;"></div>
<span class="t" style="left:1779px;top:321.5px;font-size:9.2px;line-height:13px;color:#e6e6e6;font-weight:normal;letter-spacing:-0.02px;">&lt;Quadrat&gt;</span>
<svg class="i" style="left:1715.5px;top:323.5px;" width="13" height="9" viewBox="0 0 13 9"><path d="M0.6 4.5C3 0.5 10 0.5 12.4 4.5C10 8.5 3 8.5 0.6 4.5Z" fill="#bdbdbd" stroke="#e2e2e2" stroke-width="1"/><circle cx="6.5" cy="4.4" r="2.7" fill="#2c2c2c"/><circle cx="6.5" cy="4.4" r="2.7" fill="none" stroke="#d8d8d8" stroke-width="0.5"/><circle cx="7.4" cy="3.5" r="0.8" fill="#e8e8e8"/></svg>
<div style="left:1750px;top:319px;width:3.5px;height:17.5px;background:#4a8df0;"></div>
<div style="left:1893px;top:324.5px;width:7.5px;height:7.5px;border:1px solid #2c2c2c;background:#4e4e4e;"></div>
<div style="left:1732.5px;top:109px;width:1px;height:228px;background:#363636;"></div>
<div style="left:1748.5px;top:109px;width:1px;height:228px;background:#363636;"></div>
<div style="left:1906.5px;top:109px;width:13.5px;height:228px;background:#3a3a3a;border-left:1px solid #2c2c2c;"></div>
<div style="left:1907.5px;top:125px;width:11.5px;height:39px;background:#8c8c8c;"></div>
<svg class="i" style="left:1909px;top:112.5px;" width="9" height="6" viewBox="0 0 9 6"><polygon points="0,6 9,6 4.5,0" fill="#eaeaea"/></svg>
<svg class="i" style="left:1909px;top:325px;" width="9" height="6" viewBox="0 0 9 6"><polygon points="0,0 9,0 4.5,6" fill="#eaeaea"/></svg>
<div style="left:1712px;top:337px;width:208px;height:1px;background:#2c2c2c;"></div>
<span class="t" style="left:1716px;top:339.5px;font-size:9.2px;line-height:13px;color:#e6e6e6;font-weight:normal;">Seite: 1, 2 Ebenen</span>
<svg class="i" style="left:1853.5px;top:340px;" width="11" height="11" viewBox="0 0 11 11"><path d="M0 0H11V11H4.5V6.5H0Z" fill="#d8d8d8"/><path d="M0 6.5L4.5 11V6.5Z" fill="#777"/></svg>
<svg class="i" style="left:1883px;top:340px;" width="11" height="12" viewBox="0 0 11 12"><path d="M0.5 2.8h10M3.8 2.5V1h3.4v1.5" stroke="#d0d0d0" stroke-width="1" fill="none"/><path d="M1.5 4h8l-.7 7.5H2.2Z" fill="none" stroke="#d0d0d0" stroke-width="1"/><path d="M4 5v5.5M5.5 5v5.5M7 5v5.5" stroke="#d0d0d0" stroke-width="0.9"/></svg>
<svg class="i" style="left:1909px;top:344px;" width="10" height="10" viewBox="0 0 10 10"><rect x="0" y="8" width="1" height="1" fill="#8a8a8a"/><rect x="2" y="6" width="1" height="1" fill="#8a8a8a"/><rect x="2" y="8" width="1" height="1" fill="#8a8a8a"/><rect x="4" y="4" width="1" height="1" fill="#8a8a8a"/><rect x="4" y="6" width="1" height="1" fill="#8a8a8a"/><rect x="4" y="8" width="1" height="1" fill="#8a8a8a"/><rect x="6" y="2" width="1" height="1" fill="#8a8a8a"/><rect x="6" y="4" width="1" height="1" fill="#8a8a8a"/><rect x="6" y="6" width="1" height="1" fill="#8a8a8a"/><rect x="6" y="8" width="1" height="1" fill="#8a8a8a"/><rect x="8" y="0" width="1" height="1" fill="#8a8a8a"/><rect x="8" y="2" width="1" height="1" fill="#8a8a8a"/><rect x="8" y="4" width="1" height="1" fill="#8a8a8a"/><rect x="8" y="6" width="1" height="1" fill="#8a8a8a"/><rect x="8" y="8" width="1" height="1" fill="#8a8a8a"/></svg>
<div style="left:1712px;top:355.5px;width:208px;height:16.5px;background:#2d2d2d;border-top:1px solid #262626;"></div>
<div style="left:1712px;top:356.5px;width:49px;height:15.5px;background:#3b3b3b;border-right:1px solid #262626;"></div>
<span class="t" style="left:1719px;top:357.55px;font-size:10.5px;line-height:13px;color:#b4b4b4;font-weight:bold;letter-spacing:-0.05px;">Kontur</span>
<div style="left:1761px;top:356.0px;width:56px;height:16.0px;background:#484848;border-right:1px solid #262626;border-left:1px solid #262626;"></div>
<svg class="i" style="left:1765.5px;top:358.5px;" width="6" height="11" viewBox="0 0 6 11"><path d="M0.5 4.6L3 1.6L5.5 4.6M0.5 6.4L3 9.4L5.5 6.4" stroke="#e8e8e8" stroke-width="1.1" fill="none"/></svg>
<span class="t" style="left:1774.5px;top:357.55px;font-size:10.5px;line-height:13px;color:#f2f2f2;font-weight:bold;letter-spacing:0.28px;">Verlauf</span>
<svg class="i" style="left:1901px;top:360.0px;" width="15" height="8" viewBox="0 0 15 8"><polygon points="0,1 4.6,1 2.3,3.6" fill="#d8d8d8"/><path d="M6 0.5h9M6 2.8h9M6 5.1h9M6 7.4h9" stroke="#d8d8d8" stroke-width="1"/></svg>
<div style="left:1717px;top:379.5px;width:28px;height:28.5px;background:linear-gradient(90deg,#f4f4f4,#1a1a1a);border:1px solid #777;box-shadow:0 0 0 1px #3a3a3a;"></div>
<span class="t" style="left:1781.5px;top:383.5px;font-size:9.2px;line-height:13px;color:#e6e6e6;font-weight:normal;">Typ:</span>
<div class="fd" style="left:1803.5px;top:383px;width:100.5px;height:13px;"></div>
<div style="left:1890px;top:385px;width:1px;height:9px;background:#3a3a3a;"></div>
<svg class="i" style="left:1891px;top:383px;" width="13" height="13" viewBox="0 0 13 13"><polygon points="3,4 10,4 6.5,9.6" fill="#f2f2f2"/></svg>
<span class="t" style="left:1768.5px;top:403.5px;font-size:9.2px;line-height:13px;color:#e6e6e6;font-weight:normal;">Winkel:</span>
<div style="left:1803.5px;top:403px;width:30px;height:12.5px;background:#a3a3a3;border:1px solid #2c2c2c;"></div>
<span class="t" style="left:1836px;top:402.5px;font-size:9.2px;line-height:13px;color:#e6e6e6;font-weight:normal;">o</span>
<span class="t" style="left:1763.5px;top:423.5px;font-size:9.2px;line-height:13px;color:#e6e6e6;font-weight:normal;">Position:</span>
<div style="left:1803.5px;top:423px;width:30px;height:12.5px;background:#a3a3a3;border:1px solid #2c2c2c;"></div>
<span class="t" style="left:1836px;top:423.5px;font-size:9.2px;line-height:13px;color:#e6e6e6;font-weight:normal;">%</span>
<span class="t" style="left:1754.5px;top:445.5px;font-size:9.2px;line-height:13px;color:#e6e6e6;font-weight:normal;">Umkehren</span>
<svg class="i" style="left:1806.5px;top:442.5px;" width="18" height="16" viewBox="0 0 18 16"><rect x="0.5" y="0.5" width="7" height="6.5" fill="#6a6a6a" stroke="#e0e0e0"/><rect x="9.5" y="8.5" width="7" height="6.5" fill="#9a9a9a" stroke="#e0e0e0"/><path d="M10.5 2.5h4v3.5M12.5 4.5L14.5 6.5L16.5 4.5M6.5 13h-4V9.5M0.5 11L2.5 9L4.5 11" stroke="#e0e0e0" stroke-width="1" fill="none"/></svg>
<div style="left:1720.5px;top:475px;width:185px;height:9px;background:linear-gradient(90deg,#fff,#000);border:1px solid #2a2a2a;"></div>
<div style="left:1712px;top:505.5px;width:208px;height:2px;background:#2c2c2c;"></div>
<div style="left:1712px;top:507.5px;width:208px;height:16.5px;background:#2d2d2d;border-top:1px solid #262626;"></div>
<div style="left:1712px;top:508.0px;width:55.5px;height:16.0px;background:#484848;border-right:1px solid #262626;"></div>
<svg class="i" style="left:1716px;top:510.5px;" width="6" height="11" viewBox="0 0 6 11"><path d="M0.5 4.6L3 1.6L5.5 4.6M0.5 6.4L3 9.4L5.5 6.4" stroke="#e8e8e8" stroke-width="1.1" fill="none"/></svg>
<span class="t" style="left:1725px;top:509.54999999999995px;font-size:10.5px;line-height:13px;color:#f2f2f2;font-weight:bold;letter-spacing:0.14px;">Effekte</span>
<div style="left:1767.5px;top:508.5px;width:87.5px;height:15.5px;background:#3b3b3b;border-right:1px solid #262626;"></div>
<span class="t" style="left:1774.5px;top:509.54999999999995px;font-size:10.5px;line-height:13px;color:#b4b4b4;font-weight:bold;letter-spacing:0.2px;">Objektformate</span>
<svg class="i" style="left:1901px;top:512.0px;" width="15" height="8" viewBox="0 0 15 8"><polygon points="0,1 4.6,1 2.3,3.6" fill="#d8d8d8"/><path d="M6 0.5h9M6 2.8h9M6 5.1h9M6 7.4h9" stroke="#d8d8d8" stroke-width="1"/></svg>
<div style="left:1715px;top:533px;width:98px;height:13.5px;background:#505050;border:1px solid #333;"></div>
<div style="left:1799.5px;top:535px;width:1px;height:9.5px;background:#3c3c3c;"></div>
<svg class="i" style="left:1800.5px;top:533px;" width="12" height="13.5" viewBox="0 0 12 13.5"><polygon points="2.7,4.3 9.3,4.3 6,9.7" fill="#777"/></svg>
<span class="t" style="left:1823px;top:533.5px;font-size:9.2px;line-height:13px;color:#c4c4c4;font-weight:normal;">Deckkraft:</span>
<div style="left:1867px;top:533.5px;width:37px;height:13px;background:#a3a3a3;border:1px solid #2c2c2c;"></div>
<div style="left:1903.5px;top:533.5px;width:13px;height:13px;background:#5a5a5a;border:1px solid #2c2c2c;"></div>
<svg class="i" style="left:1903.5px;top:533.5px;" width="13" height="13" viewBox="0 0 13 13"><polygon points="4.5,3 9.5,6.5 4.5,10" fill="#8a8a8a"/></svg>
<div style="left:1712px;top:553px;width:208px;height:1px;background:#2c2c2c;"></div>
<div style="left:1712px;top:554px;width:208px;height:19px;background:linear-gradient(#505c76,#46516a);"></div>
<svg class="i" style="left:1714.5px;top:560.5px;" width="10" height="7" viewBox="0 0 10 7"><polygon points="0,0.5 9.5,0.5 4.75,6.5" fill="#e8e8e8"/></svg>
<span class="t" style="left:1727px;top:557.5px;font-size:9.2px;line-height:13px;color:#c9cedb;font-weight:bold;">Objekt:</span>
<div style="left:1712px;top:573px;width:208px;height:1px;background:#363636;"></div>
<span class="t" style="left:1732px;top:577.5px;font-size:9.2px;line-height:13px;color:#c8c8c8;font-weight:normal;">Kontur:</span>
<div style="left:1712px;top:593px;width:208px;height:1px;background:#363636;"></div>
<span class="t" style="left:1732px;top:597.5px;font-size:9.2px;line-height:13px;color:#c8c8c8;font-weight:normal;">Fl&#228;che:</span>
<div style="left:1712px;top:613px;width:208px;height:1px;background:#363636;"></div>
<span class="t" style="left:1732px;top:617.5px;font-size:9.2px;line-height:13px;color:#c8c8c8;font-weight:normal;">Text:</span>
<div style="left:1712px;top:633px;width:208px;height:1px;background:#363636;"></div>
<div style="left:1715px;top:637px;width:11.5px;height:11.5px;background:#505050;border:1px solid #3a3a3a;"></div>
<span class="t" style="left:1731px;top:636.5px;font-size:9.2px;line-height:13px;color:#7e7e7e;font-weight:normal;">F&#252;llmeth. isolieren</span>
<div style="left:1817.5px;top:637px;width:11.5px;height:11.5px;background:#505050;border:1px solid #3a3a3a;"></div>
<span class="t" style="left:1833px;top:636.5px;font-size:9.2px;line-height:13px;color:#7e7e7e;font-weight:normal;">Aussparungsgr.</span>
<div style="left:1715px;top:653px;width:203px;height:1px;background:#3a3a3a;"></div>
<svg class="i" style="left:1824px;top:657px;" width="12" height="11" viewBox="0 0 12 11"><rect x="0.5" y="0.5" width="10" height="10" fill="#8a8a8a" stroke="#777"/><path d="M1 10L10 1" stroke="#c05050" stroke-width="1.6"/><rect x="1.5" y="1.5" width="3" height="3" fill="#b08080"/><rect x="6.5" y="6.5" width="3" height="3" fill="#b08080"/></svg>
<span class="t" style="left:1852px;top:655px;font-family:'Liberation Serif',serif;font-style:italic;font-size:14px;line-height:14px;color:#8a8a8a;">fx</span>
<svg class="i" style="left:1864px;top:666px;" width="5" height="3" viewBox="0 0 5 3"><polygon points="0,0 4,0 2,2.5" fill="#8a8a8a"/></svg>
<svg class="i" style="left:1884px;top:656.5px;" width="11" height="12" viewBox="0 0 11 12"><path d="M0.5 2.8h10M3.8 2.5V1h3.4v1.5" stroke="#8a8a8a" stroke-width="1" fill="none"/><path d="M1.5 4h8l-.7 7.5H2.2Z" fill="none" stroke="#8a8a8a" stroke-width="1"/><path d="M4 5v5.5M5.5 5v5.5M7 5v5.5" stroke="#8a8a8a" stroke-width="0.9"/></svg>
<div style="left:1712px;top:671.5px;width:208px;height:2px;background:#2c2c2c;"></div>
<div style="left:1712px;top:673px;width:208px;height:16.5px;background:#2d2d2d;border-top:1px solid #262626;"></div>
<div style="left:1712px;top:673.5px;width:94.5px;height:16.0px;background:#484848;border-right:1px solid #262626;"></div>
<svg class="i" style="left:1716px;top:676px;" width="6" height="11" viewBox="0 0 6 11"><path d="M0.5 4.6L3 1.6L5.5 4.6M0.5 6.4L3 9.4L5.5 6.4" stroke="#e8e8e8" stroke-width="1.1" fill="none"/></svg>
<span class="t" style="left:1725px;top:675.05px;font-size:10.5px;line-height:13px;color:#f2f2f2;font-weight:bold;letter-spacing:0.16px;">Absatzformate</span>
<svg class="i" style="left:1901px;top:677.5px;" width="15" height="8" viewBox="0 0 15 8"><polygon points="0,1 4.6,1 2.3,3.6" fill="#d8d8d8"/><path d="M6 0.5h9M6 2.8h9M6 5.1h9M6 7.4h9" stroke="#d8d8d8" stroke-width="1"/></svg>
<span class="t" style="left:1714px;top:695.5px;font-size:9.2px;line-height:13px;color:#e6e6e6;font-weight:normal;">[Einf. Abs.]+</span>
<svg class="i" style="left:1904px;top:694.5px;" width="10" height="14" viewBox="0 0 10 14"><path d="M6.2 0.3L1.5 7.2H4.8L3 13.5L8.8 5.7H5.5L7.8 0.3Z" fill="#e0e0e0"/></svg>
<div style="left:1712px;top:711.5px;width:208px;height:1px;background:#2c2c2c;"></div>
<div style="left:1712px;top:712.5px;width:195px;height:159px;background:#474747;"></div>
<div style="left:1712px;top:712.5px;width:195px;height:19.5px;background:linear-gradient(#505c76,#46516a);"></div>
<span class="t" style="left:1744px;top:718.0px;font-size:9.2px;line-height:13px;color:#fff;font-weight:bold;">[Einf. Abs.]+</span>
<div style="left:1906.5px;top:712.5px;width:13.5px;height:159px;background:#3c3c3c;border-left:1px solid #2c2c2c;"></div>
<svg class="i" style="left:1909px;top:717px;" width="8" height="6" viewBox="0 0 8 6"><polygon points="0,5.5 8,5.5 4,0" fill="#6a6a6a"/></svg>
<svg class="i" style="left:1909px;top:862px;" width="8" height="6" viewBox="0 0 8 6"><polygon points="0,0 8,0 4,5.5" fill="#6a6a6a"/></svg>
<div style="left:1712px;top:871.5px;width:208px;height:1px;background:#2c2c2c;"></div>
<svg class="i" style="left:1790.5px;top:875px;" width="13" height="11" viewBox="0 0 13 11"><path d="M0.5 2C0.5 1 1 0.5 2 0.5H4.5L6 2H11.5C12.3 2 12.5 2.4 12.5 3V9.5C12.5 10.3 12.3 10.5 11.5 10.5H1.5C0.8 10.5 0.5 10.3 0.5 9.5Z" fill="#d0d0d0"/></svg>
<span class="t" style="left:1819px;top:874.0px;font-size:12px;line-height:13px;color:#d8d8d8;font-weight:bold;">&#182;</span>
<svg class="i" style="left:1827px;top:875px;" width="10" height="10" viewBox="0 0 10 10"><path d="M1 8L8 2M3 3.5L7.5 6.5M6 1.5L4.5 8" stroke="#d8d8d8" stroke-width="0.9"/></svg>
<svg class="i" style="left:1851.5px;top:875px;" width="11" height="11" viewBox="0 0 11 11"><path d="M0 0H11V11H4.5V6.5H0Z" fill="#d0d0d0"/><path d="M0 6.5L4.5 11V6.5Z" fill="#777"/></svg>
<svg class="i" style="left:1881px;top:874.5px;" width="11" height="12" viewBox="0 0 11 12"><path d="M0.5 2.8h10M3.8 2.5V1h3.4v1.5" stroke="#7a7a7a" stroke-width="1" fill="none"/><path d="M1.5 4h8l-.7 7.5H2.2Z" fill="none" stroke="#7a7a7a" stroke-width="1"/><path d="M4 5v5.5M5.5 5v5.5M7 5v5.5" stroke="#7a7a7a" stroke-width="0.9"/></svg>
<svg class="i" style="left:1909px;top:878px;" width="10" height="10" viewBox="0 0 10 10"><rect x="0" y="8" width="1" height="1" fill="#8a8a8a"/><rect x="2" y="6" width="1" height="1" fill="#8a8a8a"/><rect x="2" y="8" width="1" height="1" fill="#8a8a8a"/><rect x="4" y="4" width="1" height="1" fill="#8a8a8a"/><rect x="4" y="6" width="1" height="1" fill="#8a8a8a"/><rect x="4" y="8" width="1" height="1" fill="#8a8a8a"/><rect x="6" y="2" width="1" height="1" fill="#8a8a8a"/><rect x="6" y="4" width="1" height="1" fill="#8a8a8a"/><rect x="6" y="6" width="1" height="1" fill="#8a8a8a"/><rect x="6" y="8" width="1" height="1" fill="#8a8a8a"/><rect x="8" y="0" width="1" height="1" fill="#8a8a8a"/><rect x="8" y="2" width="1" height="1" fill="#8a8a8a"/><rect x="8" y="4" width="1" height="1" fill="#8a8a8a"/><rect x="8" y="6" width="1" height="1" fill="#8a8a8a"/><rect x="8" y="8" width="1" height="1" fill="#8a8a8a"/></svg>
<div style="left:1712px;top:889.5px;width:208px;height:2px;background:#2c2c2c;"></div>
<div style="left:1712px;top:891.5px;width:208px;height:16.5px;background:#2d2d2d;border-top:1px solid #262626;"></div>
<div style="left:1712px;top:892.0px;width:99px;height:16.0px;background:#484848;border-right:1px solid #262626;"></div>
<svg class="i" style="left:1716px;top:894.5px;" width="6" height="11" viewBox="0 0 6 11"><path d="M0.5 4.6L3 1.6L5.5 4.6M0.5 6.4L3 9.4L5.5 6.4" stroke="#e8e8e8" stroke-width="1.1" fill="none"/></svg>
<span class="t" style="left:1725px;top:893.55px;font-size:10.5px;line-height:13px;color:#f2f2f2;font-weight:bold;letter-spacing:0.13px;">Zeichenformate</span>
<svg class="i" style="left:1901px;top:896.0px;" width="15" height="8" viewBox="0 0 15 8"><polygon points="0,1 4.6,1 2.3,3.6" fill="#d8d8d8"/><path d="M6 0.5h9M6 2.8h9M6 5.1h9M6 7.4h9" stroke="#d8d8d8" stroke-width="1"/></svg>
<span class="t" style="left:1714px;top:914.5px;font-size:9.2px;line-height:13px;color:#e6e6e6;font-weight:normal;">[Ohne]</span>
<svg class="i" style="left:1904px;top:913.5px;" width="10" height="14" viewBox="0 0 10 14"><path d="M6.2 0.3L1.5 7.2H4.8L3 13.5L8.8 5.7H5.5L7.8 0.3Z" fill="#e0e0e0"/></svg>
<div style="left:1712px;top:929.5px;width:208px;height:1px;background:#2c2c2c;"></div>
<div style="left:1712px;top:930.5px;width:195px;height:19px;background:linear-gradient(#505c76,#46516a);"></div>
<span class="t" style="left:1744px;top:935.5px;font-size:9.2px;line-height:13px;color:#fff;font-weight:bold;">[Ohne]</span>
<svg class="i" style="left:1891px;top:935px;" width="12" height="12" viewBox="0 0 12 12"><path d="M1 1L11 11" stroke="#e6e6e6" stroke-width="1.1"/><path d="M8.5 1L11 3.5L4 10.5L1 11.5L2 8Z" fill="none" stroke="#e6e6e6" stroke-width="1"/><circle cx="10" cy="2" r="1.5" fill="#e6e6e6"/></svg>
<div style="left:1906.5px;top:930.5px;width:13.5px;height:19px;background:#3c3c3c;border-left:1px solid #2c2c2c;"></div>
<svg class="i" style="left:1910px;top:934px;" width="7" height="5" viewBox="0 0 7 5"><polygon points="0,4.5 7,4.5 3.5,0" fill="#5e5e5e"/></svg>
<svg class="i" style="left:1910px;top:943.5px;" width="7" height="5" viewBox="0 0 7 5"><polygon points="0,0 7,0 3.5,4.5" fill="#5e5e5e"/></svg>
<div style="left:1712px;top:949.5px;width:208px;height:1px;background:#2c2c2c;"></div>
<svg class="i" style="left:1820px;top:954.5px;" width="13" height="11" viewBox="0 0 13 11"><path d="M0.5 2C0.5 1 1 0.5 2 0.5H4.5L6 2H11.5C12.3 2 12.5 2.4 12.5 3V9.5C12.5 10.3 12.3 10.5 11.5 10.5H1.5C0.8 10.5 0.5 10.3 0.5 9.5Z" fill="#d0d0d0"/></svg>
<svg class="i" style="left:1851.5px;top:954.5px;" width="11" height="11" viewBox="0 0 11 11"><path d="M0 0H11V11H4.5V6.5H0Z" fill="#d0d0d0"/><path d="M0 6.5L4.5 11V6.5Z" fill="#777"/></svg>
<svg class="i" style="left:1881px;top:954px;" width="11" height="12" viewBox="0 0 11 12"><path d="M0.5 2.8h10M3.8 2.5V1h3.4v1.5" stroke="#7a7a7a" stroke-width="1" fill="none"/><path d="M1.5 4h8l-.7 7.5H2.2Z" fill="none" stroke="#7a7a7a" stroke-width="1"/><path d="M4 5v5.5M5.5 5v5.5M7 5v5.5" stroke="#7a7a7a" stroke-width="0.9"/></svg>
<div style="left:1712px;top:968px;width:208px;height:1px;background:#2c2c2c;"></div>
<div style="left:1712px;top:969px;width:208px;height:14px;background:#484848;"></div>
</body></html>
